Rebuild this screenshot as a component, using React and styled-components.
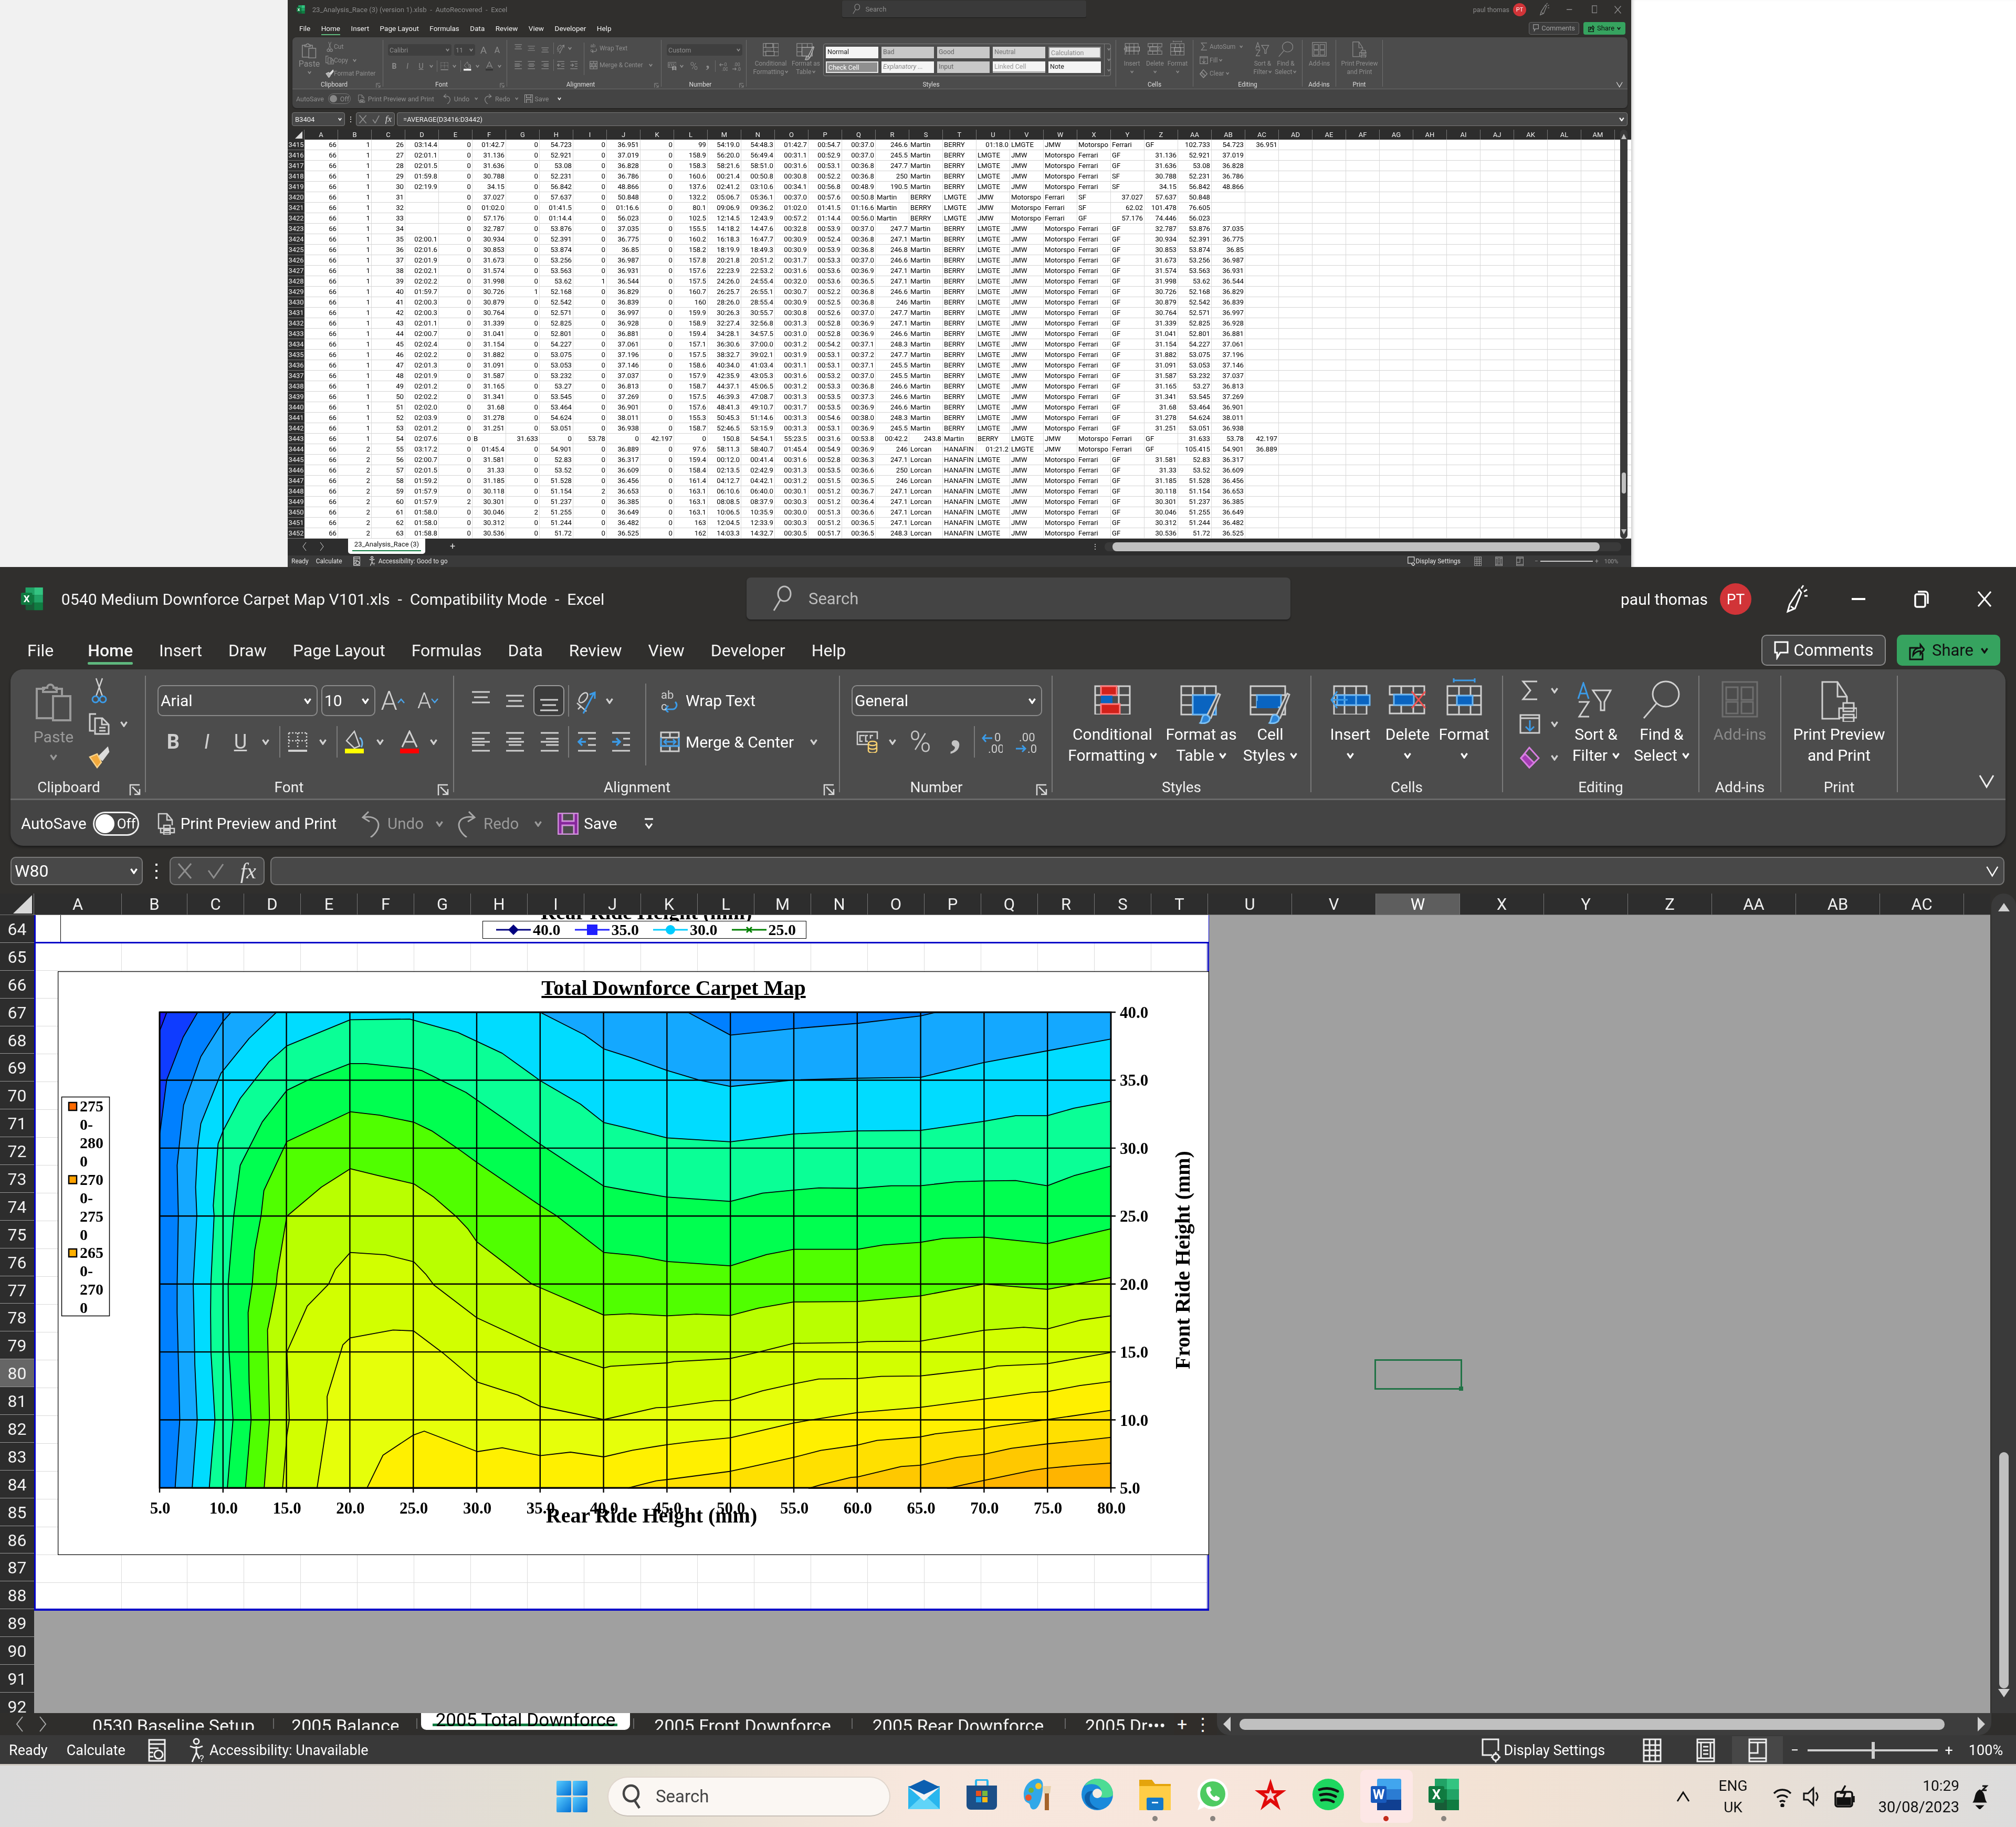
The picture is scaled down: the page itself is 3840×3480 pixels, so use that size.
import React from "react";
import styled, { createGlobalStyle } from "styled-components";

const UI = `Roboto, "Noto Sans", sans-serif`;
const SERIF = `"Liberation Serif", serif`;

const Global = createGlobalStyle`
  html, body { margin: 0; padding: 0; background: #fff; }
  * { box-sizing: border-box; }
  body { font-family: ${UI}; }
`;

/* ---------- icons ---------- */
const Svg = ({ w, h, s = 1, sw = 3, children }) => (
  <svg
    width={w * s}
    height={h * s}
    viewBox={`0 0 ${w} ${h}`}
    fill="none"
    stroke="currentColor"
    strokeWidth={sw}
    style={{ display: "block", flex: "none" }}
  >
    {children}
  </svg>
);

const Chev = ({ s = 1, big }) => (
  <Svg w={big ? 32 : 14} h={big ? 32 : 12} s={s} sw={big ? 3 : 3.4}>
    {big ? <path d="M3 6 16 28 29 6" /> : <path d="M1.5 2 7 10l5.5-8" />}
  </Svg>
);

const PasteIcon = ({ s }) => (
  <Svg w={68} h={78} s={s} sw={4}>
    <path d="M18 16H2v56h32" />
    <path d="M36 16h14v12" />
    <path d="M14 22v-8h8a6 6 0 0 1 12 0h6v8z" />
    <rect x={33} y={30} width={33} height={46} />
  </Svg>
);
const CutIcon = ({ s }) => (
  <Svg w={36} h={50} s={s} sw={2.5}>
    <path d="M12 2l12 34M24 2 12 36" />
    <circle cx={11} cy={42} r={6} stroke="#3b9be8" strokeWidth={3} />
    <circle cx={25} cy={42} r={6} stroke="#3b9be8" strokeWidth={3} />
  </Svg>
);
const CopyIcon = ({ s }) => (
  <Svg w={40} h={42} s={s}>
    <path d="M14 2H2v32h8" />
    <path d="M12 10h14l12 12v18H12z" />
    <path d="M25 10v12h13M20 28h12M20 34h12" />
  </Svg>
);
const BrushIcon = ({ s }) => (
  <Svg w={40} h={42} s={s} sw={2.5}>
    <path d="M36 2l2 8-12 16-8-6z" fill="#dcdcdc" stroke="#dcdcdc" />
    <path d="M2 20 16 14 24 30 16 40z" fill="#f2a93c" stroke="#f6d28c" />
  </Svg>
);
const AlignV = ({ pos, s }) => {
  const y = pos === "top" ? [3, 13, 23] : pos === "mid" ? [10, 20, 30] : [18, 28, 38];
  return (
    <Svg w={36} h={40} s={s} sw={3}>
      <path d={`M1 ${y[0]}h34M5 ${y[1]}h26M1 ${y[2]}h34`} />
    </Svg>
  );
};
const AlignH = ({ pos, s }) => {
  const m = pos === "left" ? "M1 14h24" : pos === "center" ? "M6 14h24" : "M11 14h24";
  const b = pos === "left" ? "M1 26h24" : pos === "center" ? "M6 26h24" : "M11 26h24";
  return (
    <Svg w={36} h={40} s={s} sw={3}>
      <path d={`M1 3h34${m}M1 20h34${b}M1 37h34`} />
    </Svg>
  );
};
const Orient = ({ s }) => (
  <Svg w={42} h={52} s={s} sw={2.5}>
    <ellipse cx={14} cy={20} rx={6} ry={11} transform="rotate(38 14 20)" />
    <path d="M2 30 20 46M4 42l6-6" />
    <path d="M14 50 34 12M26 14l10-4v12" stroke="#3b9be8" strokeWidth={3} />
  </Svg>
);
const Outdent = ({ s, flip }) => (
  <Svg w={36} h={40} s={s}>
    <path d={flip ? "M1 3h34M1 37h34M22 14h13M22 26h13" : "M1 3h34M1 37h34M20 14h15M20 26h15"} />
    <path
      d={flip ? "M1 20h14M9 13l7 7-7 7" : "M16 20H2M9 13l-7 7 7 7"}
      stroke="#3b9be8"
      strokeWidth={3.5}
    />
  </Svg>
);
const WrapIcon = ({ s }) => (
  <Svg w={36} h={44} s={s} sw={2.5}>
    <path d="M28 24a8 8 0 0 1-6 14H10M15 31l-6 7 6 6" stroke="#3b9be8" strokeWidth={3} />
    <text x={1} y={18} fontSize={22} fontFamily={UI} fill="currentColor" stroke="none">ab</text>
    <text x={1} y={40} fontSize={22} fontFamily={UI} fill="currentColor" stroke="none">c</text>
  </Svg>
);
const MergeIcon = ({ s }) => (
  <Svg w={38} h={40} s={s} sw={3}>
    <path d="M2 2h34v36H2zM2 12h34M2 28h34M19 2v10M19 28v10" />
    <path d="M2 12v16h34V12M9 20h20M13 15l-5 5 5 5M25 15l5 5-5 5" stroke="#3b9be8" />
  </Svg>
);
const BorderIcon = ({ s }) => (
  <Svg w={38} h={40} s={s} sw={2.5}>
    <path d="M2 3h34M2 3v30M36 3v30M19 3v30M2 18h34" strokeDasharray="3 3" />
    <path d="M1 37h36" strokeWidth={4} />
  </Svg>
);
const FillIcon = ({ s }) => (
  <Svg w={42} h={44} s={s} sw={2.5}>
    <path d="M3 20 18 2l10 28-10 4z" />
    <path d="M28 14c6 4 6 14 3 18" stroke="#68b5f0" strokeWidth={3} />
    <rect x={0} y={35} width={36} height={9} fill="#ffff00" stroke="none" />
  </Svg>
);
const ColorA = ({ s }) => (
  <Svg w={36} h={44} s={s} sw={3}>
    <path d="M4 32 18 2l14 30M9 22h18" />
    <rect x={0} y={35} width={36} height={9} fill="#ff0000" stroke="none" />
  </Svg>
);
const Acct = ({ s }) => (
  <Svg w={42} h={42} s={s} sw={2.5}>
    <path d="M24 26H2V2h38v14" />
    <path d="M12 9H7v11h5M16 9h-4M22 9h-4v11h4M32 9h-5v6" />
    <ellipse cx={31} cy={24} rx={8} ry={4} stroke="#f7d070" />
    <path d="M23 24v14a8 4 0 0 0 16 0V24M23 31a8 4 0 0 0 16 0" stroke="#f7d070" />
  </Svg>
);
const DecInc = ({ s, out }) => (
  <Svg w={40} h={46} s={s} sw={3}>
    {out ? (
      <>
        <path d="M2 36h18M8 29l-6 7 6 7" stroke="#3b9be8" transform="translate(0 -20)" />
        <text x={24} y={22} fontSize={22} fontFamily={UI} fill="currentColor" stroke="none">0</text>
        <text x={12} y={44} fontSize={22} fontFamily={UI} fill="currentColor" stroke="none">.00</text>
      </>
    ) : (
      <>
        <text x={6} y={22} fontSize={22} fontFamily={UI} fill="currentColor" stroke="none">.00</text>
        <path d="M0 36h18M12 30l6 6-6 6" stroke="#3b9be8" />
        <text x={22} y={44} fontSize={22} fontFamily={UI} fill="currentColor" stroke="none">.0</text>
      </>
    )}
  </Svg>
);
const TableBase = ({ children, s, w = 70, h = 56 }) => (
  <Svg w={w} h={h} s={s} sw={3}>
    <path d="M2 2h66v54H2zM2 19h66M2 38h66M24 2v54M47 2v54" />
    {children}
  </Svg>
);
const CondIcon = ({ s }) => (
  <TableBase s={s}>
    <rect x={13} y={2} width={30} height={17} fill="#d2211a" stroke="#ff7d7d" />
    <rect x={13} y={20} width={22} height={18} fill="#0a64c0" stroke="none" />
    <rect x={13} y={36} width={36} height={19} fill="#d2211a" stroke="#ff7d7d" />
  </TableBase>
);
const Paintbrush = () => (
  <g>
    <path d="M50 60 72 16l4 2-18 46" fill="#4c4c4c" stroke="#c8c8c8" />
    <path d="M44 58c6-4 14 2 12 8-2 6-12 8-18 6 4-4 2-10 6-14z" fill="#2e86d8" stroke="#7cc0f4" />
  </g>
);
const FmtTableIcon = ({ s }) => (
  <Svg w={80} h={74} s={s} sw={3}>
    <path d="M2 2h66v54H2zM2 19h66M2 38h66M24 2v54M47 2v54" />
    <rect x={24} y={19} width={44} height={37} fill="#0a64c0" stroke="#6cb6f2" />
    <Paintbrush />
  </Svg>
);
const CellStyleIcon = ({ s }) => (
  <Svg w={80} h={74} s={s} sw={3}>
    <path d="M2 2h66v54H2zM2 19h66M2 42h66" />
    <rect x={14} y={19} width={46} height={23} fill="#0a64c0" stroke="#6cb6f2" />
    <rect x={14} y={30} width={40} height={14} fill="#0a64c0" stroke="none" />
    <Paintbrush />
  </Svg>
);
const InsertIcon = ({ s }) => (
  <Svg w={78} h={56} s={s} sw={3}>
    <path d="M8 2h62v54H8zM8 19h62M8 38h62M28 2v54M50 2v54" />
    <rect x={14} y={19} width={62} height={19} fill="#0a64c0" stroke="#6cb6f2" />
    <path d="M28 19v19M50 19v19" stroke="#6cb6f2" />
    <path d="M34 28H4M14 12 3 28l11 16" stroke="#3b9be8" />
  </Svg>
);
const DeleteIcon = ({ s }) => (
  <Svg w={72} h={56} s={s} sw={3}>
    <path d="M2 2h66v16H2zM2 38h66v16H2zM24 2v16M47 2v16M24 38v16M47 38v16" />
    <rect x={10} y={18} width={38} height={20} fill="#0a64c0" stroke="#6cb6f2" />
    <path d="M44 12l26 32M70 12 44 44" stroke="#ef4f4f" />
  </Svg>
);
const FormatIcon = ({ s }) => (
  <Svg w={68} h={72} s={s} sw={3}>
    <path d="M2 16h64v54H2zM2 34h64M2 52h64M24 16v54M46 16v54" />
    <rect x={20} y={34} width={30} height={18} fill="#0a64c0" stroke="#6cb6f2" />
    <path d="M14 5h40M14 1v8M54 1v8" stroke="#3b9be8" />
  </Svg>
);
const SigmaIcon = ({ s }) => (
  <Svg w={32} h={38} s={s} sw={3}>
    <path d="M30 2H3l14 17L3 36h27" />
  </Svg>
);
const FillDownIcon = ({ s }) => (
  <Svg w={40} h={38} s={s} sw={3}>
    <path d="M2 2h36v34H2zM2 8h36" />
    <path d="M20 12v20M12 24l8 8 8-8" stroke="#3b9be8" />
  </Svg>
);
const EraserIcon = ({ s }) => (
  <Svg w={38} h={42} s={s} sw={3}>
    <path d="M18 2 36 22 18 40 2 22z" stroke="#d77ee0" />
    <path d="M2 22 10 14l17 17-9 9z" fill="#a43cb4" stroke="#d77ee0" />
  </Svg>
);
const SortIcon = ({ s }) => (
  <Svg w={72} h={68} s={s} sw={3}>
    <path d="M2 32 12 2l10 30M5 22h14" stroke="#3b9be8" />
    <path d="M3 38h19L4 66h19" />
    <path d="M30 16h34L52 38v16h-7V38z" />
  </Svg>
);
const FindIcon = ({ s }) => (
  <Svg w={72} h={74} s={s} sw={3}>
    <ellipse cx={44} cy={26} rx={25} ry={24} />
    <path d="M26 44 2 72" />
  </Svg>
);
const AddinsIcon = ({ s }) => (
  <Svg w={70} h={70} s={s} sw={3}>
    <path d="M2 2h66v66H2z" />
    <path d="M9 12h22v24H9zM38 12h22v24H38zM9 40h22v22H9zM38 40h22v22H38z" />
  </Svg>
);
const PrintPrevIcon = ({ s }) => (
  <Svg w={68} h={78} s={s} sw={3}>
    <path d="M36 72H2V2h29l18 28v12" />
    <path d="M31 2v28h18" />
    <path d="M42 42h20v16H42zM34 52h34v18H34zM42 64h20v14H42z" fill="#4c4c4c" />
  </Svg>
);
const UndoIcon = ({ s, flip }) => (
  <Svg w={40} h={52} s={s} sw={3}>
    <g transform={flip ? "translate(40 0) scale(-1 1)" : undefined}>
      <path d="M14 3 3 14l13 8" />
      <path d="M4 14c30-6 40 18 14 38" />
    </g>
  </Svg>
);
const SaveIcon = ({ s }) => (
  <Svg w={40} h={42} s={s} sw={3}>
    <rect x={1} y={1} width={38} height={40} fill="#87279c" stroke="#ce8fd8" />
    <rect x={9} y={1} width={22} height={15} fill="#4c4c4c" stroke="#ce8fd8" />
    <rect x={9} y={24} width={22} height={17} fill="#4c4c4c" stroke="#ce8fd8" />
  </Svg>
);
const PrintSmall = ({ s }) => (
  <Svg w={34} h={42} s={s} sw={2.5}>
    <path d="M14 30H2V2h16l10 12v10" />
    <path d="M18 2v12h10" />
    <path d="M12 24h12v8H12zM6 30h26v8H6zM12 34h12v8H12z" fill="#444" />
  </Svg>
);
const SearchGlass = ({ s }) => (
  <Svg w={36} h={50} s={s} sw={3}>
    <ellipse cx={22} cy={16} rx={12} ry={14} />
    <path d="M14 28 2 48" />
  </Svg>
);
const PenIcon = ({ s }) => (
  <Svg w={40} h={56} s={s} sw={3}>
    <path d="M24 10 6 38 2 52l14-6 12-30zM8 42l6 4" />
    <path d="M28 8l4-6M33 14l6-4M34 22h6" />
  </Svg>
);
const Minimize = ({ s }) => (
  <Svg w={26} h={6} s={s} sw={4}>
    <path d="M0 3h26" />
  </Svg>
);
const Restore = ({ s }) => (
  <Svg w={28} h={34} s={s} sw={3.5}>
    <rect x={2} y={8} width={19} height={24} rx={3} />
    <path d="M7 3h14a5 5 0 0 1 5 5v18" />
  </Svg>
);
const Maximize = ({ s }) => (
  <Svg w={24} h={34} s={s} sw={3}>
    <rect x={2} y={2} width={20} height={30} />
  </Svg>
);
const Close = ({ s }) => (
  <Svg w={26} h={30} s={s} sw={3}>
    <path d="M1 1l24 28M25 1 1 29" />
  </Svg>
);
const CommentIcon = ({ s }) => (
  <Svg w={28} h={36} s={s} sw={3}>
    <path d="M2 2h24v20H12L6 32V22H2z" />
  </Svg>
);
const ShareIcon = ({ s }) => (
  <Svg w={30} h={38} s={s} sw={3}>
    <path d="M18 14H2v22h24V24" stroke="#111" />
    <path d="M8 28c0-10 6-14 14-14V8l7 9-7 9v-6c-6 0-10 2-14 8z" stroke="#111" />
  </Svg>
);
const Launcher = ({ s }) => (
  <Svg w={22} h={24} s={s} sw={2.5}>
    <path d="M2 22V2h18" />
    <path d="M6 6l14 14M20 10v10H10" />
  </Svg>
);
const CalcSheetIcon = ({ s }) => (
  <Svg w={34} h={44} s={s} sw={3}>
    <path d="M2 2h30v40H2zM2 10h30M2 18h18M2 26h8M2 34h8" />
    <circle cx={20} cy={30} r={8} />
  </Svg>
);
const AccessIcon = ({ s }) => (
  <Svg w={34} h={48} s={s} sw={3}>
    <circle cx={14} cy={7} r={5} />
    <path d="M2 16c8 4 16 4 24 0M14 16v12L6 46M14 28l6 12" />
    <text x={20} y={46} fontSize={18} fontFamily={UI} fill="currentColor" stroke="none">?</text>
  </Svg>
);
const DisplayIcon = ({ s }) => (
  <Svg w={38} h={46} s={s} sw={3}>
    <path d="M20 32H2V2h30v22" />
    <circle cx={27} cy={36} r={6} />
    <path d="M27 26v4M27 42v4M18 36h3M33 36h3" />
  </Svg>
);
const ViewNormal = ({ s }) => (
  <Svg w={36} h={46} s={s} sw={3}>
    <path d="M2 2h32v42H2zM2 13h32M2 23h32M2 33h32M13 2v42M24 2v42" />
  </Svg>
);
const ViewPage = ({ s }) => (
  <Svg w={36} h={46} s={s} sw={3}>
    <path d="M2 2h32v42H2zM2 8h32M2 38h32M9 8v30h18V8M13 16h10M13 23h10M13 30h10" />
  </Svg>
);
const ViewBreak = ({ s }) => (
  <Svg w={36} h={46} s={s} sw={3}>
    <path d="M2 2h32v42H2zM2 8h32M2 38h32M18 8v20H2" />
  </Svg>
);
const ExcelLogo = ({ s = 1 }) => (
  <svg width={58 * s} height={60 * s} viewBox="0 0 58 60" style={{ display: "block" }}>
    <rect x={12} y={0} width={46} height={60} rx={3} fill="#185c37" />
    <rect x={35} y={0} width={23} height={20} fill="#33c481" />
    <rect x={12} y={0} width={23} height={20} fill="#21a366" />
    <rect x={12} y={20} width={23} height={20} fill="#107c41" />
    <rect x={35} y={20} width={23} height={20} fill="#21a366" />
    <rect x={35} y={40} width={23} height={20} fill="#107c41" />
    <rect x={0} y={14} width={30} height={32} rx={3} fill="#0f7a40" />
    <text x={15} y={39} fontSize={26} textAnchor="middle" fontWeight="700" fontFamily={UI} fill="#fff">X</text>
  </svg>
);
const WordLogo = () => (
  <svg width={58} height={60} viewBox="0 0 58 60" style={{ display: "block" }}>
    <rect x={12} y={0} width={46} height={60} rx={3} fill="#41a5ee" />
    <rect x={12} y={20} width={46} height={20} fill="#2b7cd3" />
    <rect x={12} y={40} width={46} height={20} fill="#103f91" />
    <rect x={0} y={14} width={30} height={32} rx={3} fill="#185abd" />
    <text x={15} y={39} fontSize={26} textAnchor="middle" fontWeight="700" fontFamily={UI} fill="#fff">W</text>
  </svg>
);
const WindowsLogo = () => (
  <svg width={59} height={60} viewBox="0 0 59 60" style={{ display: "block" }}>
    <defs>
      <linearGradient id="win" x1="0" y1="0" x2="1" y2="1">
        <stop offset="0" stopColor="#58ccff" />
        <stop offset="1" stopColor="#0470d4" />
      </linearGradient>
    </defs>
    <rect x={0} y={0} width={28} height={28} rx={2} fill="url(#win)" />
    <rect x={31} y={0} width={28} height={28} rx={2} fill="url(#win)" />
    <rect x={0} y={31} width={28} height={29} rx={2} fill="url(#win)" />
    <rect x={31} y={31} width={28} height={29} rx={2} fill="url(#win)" />
  </svg>
);
const MailIcon = () => (
  <svg width={60} height={56} viewBox="0 0 60 56" style={{ display: "block" }}>
    <rect x={0} y={12} width={60} height={44} fill="#29b6ee" />
    <path d="M0 56 30 28l30 28z" fill="#60d4f8" />
    <path d="M0 14 30 40 60 14z" fill="#f4f4f4" />
    <path d="M0 14 30 0l30 14-30 14z" fill="#0c5fb0" />
  </svg>
);
const StoreIcon = () => (
  <svg width={58} height={58} viewBox="0 0 58 58" style={{ display: "block" }}>
    <path d="M18 14V4a3 3 0 0 1 3-3h16a3 3 0 0 1 3 3v10" stroke="#29b6ee" strokeWidth={4} fill="none" />
    <path d="M0 12h58v38a8 8 0 0 1-8 8H8a8 8 0 0 1-8-8z" fill="#1c4f88" />
    <rect x={18} y={22} width={10} height={10} fill="#e8501c" />
    <rect x={30} y={22} width={10} height={10} fill="#78b83c" />
    <rect x={18} y={34} width={10} height={10} fill="#1ea0e8" />
    <rect x={30} y={34} width={10} height={10} fill="#fdb813" />
  </svg>
);
const PaintIcon = () => (
  <svg width={60} height={60} viewBox="0 0 60 60" style={{ display: "block" }}>
    <path d="M26 0C8 2 0 18 0 30c0 12 4 14 8 16 6 2 2 8 8 12 6 2 10-2 14-10 4-8 8-30 6-40-1-4-4-8-10-8z" fill="#31a8e8" />
    <circle cx={28} cy={14} r={6} fill="#f7c526" />
    <circle cx={14} cy={22} r={5} fill="#6fb23c" />
    <circle cx={9} cy={36} r={6} fill="#e9552c" />
    <rect x={40} y={26} width={8} height={34} fill="#a6642a" />
    <path d="M36 14h16l-2 14H38z" fill="#e9d2aa" />
  </svg>
);
const EdgeIcon = () => (
  <svg width={60} height={60} viewBox="0 0 60 60" style={{ display: "block" }}>
    <circle cx={30} cy={30} r={30} fill="#1a8adb" />
    <path d="M60 30C60 12 46 0 30 0 20 0 10 6 6 14c8-6 30-6 32 10 0 6-6 10-6 10 10 4 28 2 28-4z" fill="#4cdc94" />
    <path d="M6 36C6 52 22 60 36 58c-16-4-22-14-20-24 1-6 6-10 6-10C14 22 6 28 6 36z" fill="#0e5fa8" />
    <circle cx={30} cy={28} r={9} fill="#f6ece2" />
  </svg>
);
const FilesIcon = () => (
  <svg width={60} height={60} viewBox="0 0 60 60" style={{ display: "block" }}>
    <path d="M0 2h24l6 8h30v50H0z" fill="#e4a40c" />
    <rect x={0} y={14} width={60} height={46} fill="#ffcd46" />
    <rect x={14} y={36} width={32} height={24} rx={3} fill="#1478c8" />
    <rect x={24} y={44} width={12} height={3} fill="#e8f4ff" />
  </svg>
);
const WhatsIcon = () => (
  <svg width={58} height={60} viewBox="0 0 58 60" style={{ display: "block" }}>
    <path d="M29 0a29 29 0 0 1 0 58c-6 0-11-1-16-4L0 60l5-14A29 29 0 0 1 29 0z" fill="#fff" />
    <circle cx={29} cy={29} r={24} fill="#4ecb62" />
    <path d="M19 16c-4 3-3 10 2 17s12 11 17 9c3-1 5-4 4-6l-7-4-3 3c-4-2-7-6-8-10l3-3-3-7z" fill="#fff" />
  </svg>
);
const StarIcon = () => (
  <svg width={60} height={60} viewBox="0 0 60 60" style={{ display: "block" }}>
    <path d="M30 0l7 22h23L41 36l8 24-19-15-19 15 8-24L0 22h23z" fill="#e10a0a" />
    <path d="M30 20l3 8h9l-7 6 3 9-8-6-8 6 3-9-7-6h9z" fill="#f7d4d4" />
  </svg>
);
const SpotifyIcon = () => (
  <svg width={60} height={60} viewBox="0 0 60 60" style={{ display: "block" }}>
    <circle cx={30} cy={30} r={30} fill="#1ed760" />
    <path d="M13 21c12-4 24-3 35 3M15 31c10-3 20-2 29 3M17 41c8-2 16-1 23 3" stroke="#111" strokeWidth={5} fill="none" strokeLinecap="round" />
  </svg>
);

/* ---------- shared bits ---------- */
const Slot = styled.div`
  width: ${(p) => p.$w}px;
  margin-left: ${(p) => p.$ml || 0}px;
  flex: none;
  display: flex;
  align-items: center;
  justify-content: center;
  color: ${(p) => p.$c || "inherit"};
  font-size: ${(p) => p.$fs || 30}px;
  font-family: ${(p) => (p.$serif ? SERIF : "inherit")};
  font-style: ${(p) => (p.$italic ? "italic" : "normal")};
  font-weight: ${(p) => (p.$bold ? 700 : p.$light ? 300 : 400)};
  height: 100%;
`;

/* ---------- mini window (100% scale) ---------- */
const Top = styled.div`
  display: flex;
  height: 1080px;
`;
const SideLeft = styled.div`
  width: 548px;
  background: #f1f1f1;
`;
const SideRight = styled.div`
  flex: 1;
  background: #fff;
  box-shadow: inset 6px 0 6px -4px rgba(0, 0, 0, 0.25);
`;
const Mini = styled.div`
  width: 2559px;
  background: #302f2d;
  display: flex;
  flex-direction: column;
  overflow: hidden;
  color: #fff;
`;
const MTitle = styled.div`
  height: 36px;
  display: grid;
  grid-template-columns: 1056px 465px 1fr;
  align-items: center;
`;
const MTitleLeft = styled.div`
  display: flex;
  align-items: center;
  gap: 14px;
  padding-left: 17px;
  font-size: 13.2px;
  color: #8b8b8b;
  white-space: pre;
`;
const MSearch = styled.div`
  height: 32px;
  align-self: start;
  margin-top: 1px;
  background: #3a3a3a;
  border-radius: 3px;
  box-shadow: 0 1px 1px #1c1c1c;
  display: flex;
  align-items: center;
  gap: 10px;
  padding-left: 20px;
  color: #8b8b8b;
  font-size: 13px;
`;
const MUser = styled.div`
  display: flex;
  align-items: center;
  justify-content: flex-end;
  color: #8b8b8b;
  font-size: 12.5px;
  padding-right: 6px;
`;
const Avatar = styled.div`
  width: ${(p) => p.$d}px;
  height: ${(p) => p.$d}px;
  border-radius: 50%;
  background: #d13438;
  color: #fff;
  font-size: ${(p) => p.$fs}px;
  display: flex;
  align-items: center;
  justify-content: center;
  margin-left: ${(p) => p.$ml}px;
`;
const MTabs = styled.div`
  height: 35px;
  display: flex;
  align-items: center;
  padding-left: 22px;
  gap: 20.5px;
  font-size: 13.5px;
  position: relative;
`;
const MTab = styled.span`
  position: relative;
  color: #f4f4f4;
  ${(p) =>
    p.$on &&
    `&::after { content: ""; position: absolute; left: 0; right: 0; bottom: -5px; height: 2px; background: #5fb87e; }`}
`;
const MTabRight = styled.div`
  margin-left: auto;
  margin-right: 11px;
  display: flex;
  gap: 8px;
`;
const MComments = styled.div`
  width: 96px;
  height: 24px;
  border: 1px solid #666;
  border-radius: 4px;
  background: #3c3c3c;
  color: #a0a0a0;
  font-size: 13px;
  display: flex;
  align-items: center;
  justify-content: center;
  gap: 5px;
`;
const MShare = styled.div`
  width: 80px;
  height: 24px;
  border-radius: 4px;
  background: #36a35f;
  color: #111;
  font-size: 13px;
  display: flex;
  align-items: center;
  justify-content: center;
  gap: 5px;
`;
const MRibbon = styled.div`
  margin-left: 9px;
  width: 2543px;
  height: 135px;
  border-radius: 8px;
  background: #444;
  overflow: hidden;
  display: flex;
  flex-direction: column;
  box-shadow: 0 1px 2px #1b1b1b;
`;
const MGroups = styled.div`
  height: 99px;
  padding-top: 5px;
  display: flex;
  background: #4c4c4c;
  border-bottom: 1px solid #6b6b6b;
  color: #8e8e8e;
  svg { filter: grayscale(1); }
`;
const MGroup = styled.div`
  width: ${(p) => p.$w}px;
  height: 89px;
  flex: none;
  border-right: 1px solid #6e6e6e;
  display: flex;
  flex-direction: column;
  position: relative;
`;
const MBody = styled.div`
  flex: 1;
  min-height: 0;
  display: flex;
  padding-top: ${(p) => p.$pt || 0}px;
  padding-left: ${(p) => p.$pl || 0}px;
`;
const MColumn = styled.div`
  display: flex;
  flex-direction: column;
  width: ${(p) => (p.$w ? p.$w + "px" : "auto")};
  padding-top: ${(p) => p.$pt || 0}px;
  padding-left: ${(p) => p.$pl || 0}px;
  flex: none;
  align-items: ${(p) => p.$align || "stretch"};
`;
const MRow = styled.div`
  display: flex;
  align-items: center;
  height: ${(p) => p.$h || 22}px;
  margin-top: ${(p) => p.$mt || 0}px;
  font-size: 12px;
  color: #8e8e8e;
`;
const MLabel = styled.div`
  height: 16px;
  line-height: 16px;
  margin-bottom: -4px;
  padding-right: ${(p) => p.$pr || 0}px;
  text-align: center;
  font-size: 12px;
  color: #dcdcdc;
`;
const MLaunch = styled.div`
  position: absolute;
  right: 4px;
  bottom: -3px;
  color: #8e8e8e;
`;
const MCombo = styled.div`
  width: ${(p) => p.$w}px;
  height: 22px;
  margin-right: ${(p) => p.$mr || 0}px;
  background: #3f3f3f;
  border-radius: 4px;
  font-size: 12.5px;
  color: #8e8e8e;
  display: flex;
  align-items: center;
  justify-content: space-between;
  padding: 0 4px 0 3px;
`;
const MSep = styled.div`
  width: 1px;
  height: ${(p) => p.$h || 22}px;
  margin-left: ${(p) => p.$ml || 0}px;
  background: #6e6e6e;
  flex: none;
`;
const MBig = styled.div`
  width: ${(p) => p.$w}px;
  flex: none;
  display: flex;
  flex-direction: column;
  align-items: center;
  font-size: 12px;
  color: #8e8e8e;
`;
const MBigIcon = styled.div`
  height: 37px;
  padding-top: ${(p) => p.$t ?? 2}px;
  flex: none;
`;
const MBigLine = styled.div`
  height: 16px;
  line-height: 16px;
  white-space: nowrap;
  display: flex;
  align-items: center;
  gap: 2px;
`;
const Gallery = styled.div`
  margin-left: 12px;
  margin-top: 7px;
  width: 548px;
  height: 62px;
  border: 1px solid #7e7e7e;
  border-radius: 4px;
  display: grid;
  grid-template-columns: repeat(5, 100px) 17px;
  grid-template-rows: repeat(2, 22px);
  gap: 6px;
  padding: 5px 0 0 4px;
  position: relative;
`;
const Swatch = styled.div`
  background: ${(p) => p.$bg};
  color: ${(p) => p.$c};
  font-style: ${(p) => (p.$i ? "italic" : "normal")};
  font-size: 12.5px;
  line-height: 20px;
  padding-left: 3px;
  border: ${(p) => (p.$b ? `2px solid ${p.$b}` : "none")};
  border-bottom: ${(p) => (p.$u ? `3px double #888` : undefined)};
  overflow: hidden;
  white-space: nowrap;
`;
const GalleryBtn = styled.div`
  grid-column: 6;
  grid-row: 1 / span 2;
  margin-top: -5px;
  height: 60px;
  border-left: 1px solid #7e7e7e;
  display: flex;
  flex-direction: column;
  align-items: center;
  justify-content: space-around;
`;
const MTail = styled.div`
  flex: 1;
  display: flex;
  justify-content: flex-end;
  align-items: flex-end;
  padding: 0 9px 2px 0;
  color: #ddd;
`;
const MQat = styled.div`
  flex: 1;
  display: flex;
  align-items: center;
  padding-left: 7px;
  font-size: 12.5px;
  color: #8e8e8e;
  svg { filter: grayscale(1); }
`;
const MToggle = styled.div`
  width: 43px;
  height: 20px;
  margin-left: 8px;
  border: 1px solid #777;
  border-radius: 10px;
  display: flex;
  align-items: center;
  gap: 6px;
  padding-left: 2px;
  &::before { content: ""; width: 14px; height: 14px; border-radius: 50%; background: #888; }
`;
const MText = styled.span`
  margin-left: ${(p) => p.$ml || 0}px;
  white-space: nowrap;
`;
const MFormula = styled.div`
  height: 26px;
  margin-top: 8px;
  padding-left: 8px;
  display: flex;
  align-items: stretch;
  font-size: 13px;
`;
const MFBox = styled.div`
  width: ${(p) => p.$w}px;
  flex: ${(p) => (p.$grow ? 1 : "none")};
  margin-left: ${(p) => p.$ml || 0}px;
  margin-right: ${(p) => p.$mr || 0}px;
  background: #484848;
  border: 1px solid #7a7a7a;
  border-radius: 4px;
  display: flex;
  align-items: center;
  justify-content: space-between;
  padding: 0 5px;
  color: #f2f2f2;
`;
const MSheetWrap = styled.div`
  margin-top: 7px;
  display: flex;
  flex-direction: column;
  height: 779px;
  position: relative;
`;
const MColRow = styled.div`
  display: flex;
  height: 19px;
  flex: none;
  background: #2d2d2d;
`;
const MCorner = styled.div`
  width: 32px;
  border-right: 1px solid #777;
  display: flex;
  justify-content: flex-end;
  align-items: flex-end;
  padding: 0 3px 2px 0;
`;
const MColHead = styled.div`
  width: 64px;
  flex: none;
  text-align: center;
  font-size: 13px;
  line-height: 19px;
  color: #f0f0f0;
  border-right: 1px solid #777;
`;
const MRowLine = styled.div`
  display: flex;
  height: 20px;
  background: #fff;
  flex: none;
`;
const MRowHead = styled.div`
  width: 32px;
  flex: none;
  background: #2d2d2d;
  color: #eee;
  font-size: 13px;
  line-height: 20px;
  text-align: center;
  border-bottom: 1px solid #777;
`;
const MCell = styled.div`
  width: 64px;
  flex: none;
  height: 20px;
  padding: 0 2px;
  font-size: 13.2px;
  line-height: 20px;
  color: #000;
  text-align: ${(p) => (p.$left ? "left" : "right")};
  border-right: 1px solid #dadada;
  border-bottom: 1px solid #d4d4d4;
  white-space: nowrap;
  overflow: hidden;
`;
const MRowFill = styled.div`
  flex: 1;
  border-bottom: 1px solid #d4d4d4;
`;
const MVScroll = styled.div`
  position: absolute;
  right: 7px;
  top: 0;
  bottom: 0;
  width: 14px;
  background: #3a3a3a;
  border-radius: 7px;
  display: flex;
  flex-direction: column;
  align-items: center;
  padding: 8px 0;
  color: #c0c0c0;
`;
const MThumbV = styled.div`
  width: 8px;
  height: 40px;
  background: #c0c0c0;
  border-radius: 4px;
  margin-top: 635px;
`;
const MBottom = styled.div`
  height: 32px;
  display: flex;
  align-items: flex-start;
  background: #2d2d2d;
  position: relative;
  font-size: 13.5px;
  color: #ddd;
`;
const MSheetTab = styled.div`
  width: 147px;
  height: 29px;
  margin-left: 34px;
  background: #fff;
  color: #111;
  border-radius: 0 0 5px 5px;
  text-align: center;
  line-height: 22px;
  font-size: 13px;
  position: relative;
  &::after { content: ""; position: absolute; left: 8px; right: 8px; bottom: 5px; height: 2px; background: #107c41; }
`;
const MHScroll = styled.div`
  position: absolute;
  left: 1556px;
  width: 984px;
  top: 7px;
  height: 17px;
  border-radius: 8px;
  background: #3a3a3a;
  padding: 0 41px 0 15px;
`;
const MThumbH = styled.div`
  height: 100%;
  border-radius: 8px;
  background: #c0c0c0;
`;
const MStatus = styled.div`
  height: 22px;
  background: #3a3a3a;
  display: flex;
  align-items: center;
  padding-left: 7px;
  font-size: 12px;
  color: #e6e6e6;
`;

const colName = (i) => (i < 26 ? String.fromCharCode(65 + i) : "A" + String.fromCharCode(65 + i - 26));
const FIRM = ["LMGTE", "JMW", "Motorspo", "Ferrari"];

const normal = (st, lap, t, e, a, g, b, i, c, kph, el, hr, o, p, q, top, cls) => [
  "66", st, lap, t, e, a, g, b, i, c, "0", kph, el, hr, o, p, q, top,
  ...(st === "1" ? ["Martin", "BERRY"] : ["Lorcan", "HANAFIN"]),
  ...FIRM, cls, a, b, c,
];

const L1 = "1";
const L2 = "2";
const miniRows = [
  ["66", L1, "26", "03:14.4", "0", "01:42.7", "0", "54.723", "0", "36.951", "0", "99", "54:19.0", "54:48.3", "01:42.7", "00:54.7", "00:37.0", "246.6", "Martin", "BERRY", "01:18.0", ...FIRM, "GF", "102.733", "54.723", "36.951"],
  normal(L1, "27", "02:01.1", "0", "31.136", "0", "52.921", "0", "37.019", "158.9", "56:20.0", "56:49.4", "00:31.1", "00:52.9", "00:37.0", "245.5", "GF"),
  normal(L1, "28", "02:01.5", "0", "31.636", "0", "53.08", "0", "36.828", "158.3", "58:21.6", "58:51.0", "00:31.6", "00:53.1", "00:36.8", "247.7", "GF"),
  normal(L1, "29", "01:59.8", "0", "30.788", "0", "52.231", "0", "36.786", "160.6", "00:21.4", "00:50.8", "00:30.8", "00:52.2", "00:36.8", "250", "SF"),
  normal(L1, "30", "02:19.9", "0", "34.15", "0", "56.842", "0", "48.866", "137.6", "02:41.2", "03:10.6", "00:34.1", "00:56.8", "00:48.9", "190.5", "SF"),
  ["66", L1, "31", "", "0", "37.027", "0", "57.637", "0", "50.848", "0", "132.2", "05:06.7", "05:36.1", "00:37.0", "00:57.6", "00:50.8", "Martin", "BERRY", ...FIRM, "SF", "37.027", "57.637", "50.848"],
  ["66", L1, "32", "", "0", "01:02.0", "0", "01:41.5", "0", "01:16.6", "0", "80.1", "09:06.9", "09:36.2", "01:02.0", "01:41.5", "01:16.6", "Martin", "BERRY", ...FIRM, "SF", "62.02", "101.478", "76.605"],
  ["66", L1, "33", "", "0", "57.176", "0", "01:14.4", "0", "56.023", "0", "102.5", "12:14.5", "12:43.9", "00:57.2", "01:14.4", "00:56.0", "Martin", "BERRY", ...FIRM, "GF", "57.176", "74.446", "56.023"],
  normal(L1, "34", "", "0", "32.787", "0", "53.876", "0", "37.035", "155.5", "14:18.2", "14:47.6", "00:32.8", "00:53.9", "00:37.0", "247.7", "GF"),
  normal(L1, "35", "02:00.1", "0", "30.934", "0", "52.391", "0", "36.775", "160.2", "16:18.3", "16:47.7", "00:30.9", "00:52.4", "00:36.8", "247.1", "GF"),
  normal(L1, "36", "02:01.6", "0", "30.853", "0", "53.874", "0", "36.85", "158.2", "18:19.9", "18:49.3", "00:30.9", "00:53.9", "00:36.8", "246.8", "GF"),
  normal(L1, "37", "02:01.9", "0", "31.673", "0", "53.256", "0", "36.987", "157.8", "20:21.8", "20:51.2", "00:31.7", "00:53.3", "00:37.0", "246.6", "GF"),
  normal(L1, "38", "02:02.1", "0", "31.574", "0", "53.563", "0", "36.931", "157.6", "22:23.9", "22:53.2", "00:31.6", "00:53.6", "00:36.9", "247.1", "GF"),
  normal(L1, "39", "02:02.2", "0", "31.998", "0", "53.62", "1", "36.544", "157.5", "24:26.0", "24:55.4", "00:32.0", "00:53.6", "00:36.5", "247.1", "GF"),
  normal(L1, "40", "01:59.7", "0", "30.726", "1", "52.168", "0", "36.829", "160.7", "26:25.7", "26:55.1", "00:30.7", "00:52.2", "00:36.8", "246.6", "GF"),
  normal(L1, "41", "02:00.3", "0", "30.879", "0", "52.542", "0", "36.839", "160", "28:26.0", "28:55.4", "00:30.9", "00:52.5", "00:36.8", "246", "GF"),
  normal(L1, "42", "02:00.3", "0", "30.764", "0", "52.571", "0", "36.997", "159.9", "30:26.3", "30:55.7", "00:30.8", "00:52.6", "00:37.0", "247.7", "GF"),
  normal(L1, "43", "02:01.1", "0", "31.339", "0", "52.825", "0", "36.928", "158.9", "32:27.4", "32:56.8", "00:31.3", "00:52.8", "00:36.9", "247.1", "GF"),
  normal(L1, "44", "02:00.7", "0", "31.041", "0", "52.801", "0", "36.881", "159.4", "34:28.1", "34:57.5", "00:31.0", "00:52.8", "00:36.9", "246.6", "GF"),
  normal(L1, "45", "02:02.4", "0", "31.154", "0", "54.227", "0", "37.061", "157.1", "36:30.6", "37:00.0", "00:31.2", "00:54.2", "00:37.1", "248.3", "GF"),
  normal(L1, "46", "02:02.2", "0", "31.882", "0", "53.075", "0", "37.196", "157.5", "38:32.7", "39:02.1", "00:31.9", "00:53.1", "00:37.2", "247.7", "GF"),
  normal(L1, "47", "02:01.3", "0", "31.091", "0", "53.053", "0", "37.146", "158.6", "40:34.0", "41:03.4", "00:31.1", "00:53.1", "00:37.1", "245.5", "GF"),
  normal(L1, "48", "02:01.9", "0", "31.587", "0", "53.232", "0", "37.037", "157.9", "42:35.9", "43:05.3", "00:31.6", "00:53.2", "00:37.0", "245.5", "GF"),
  normal(L1, "49", "02:01.2", "0", "31.165", "0", "53.27", "0", "36.813", "158.7", "44:37.1", "45:06.5", "00:31.2", "00:53.3", "00:36.8", "246.6", "GF"),
  normal(L1, "50", "02:02.2", "0", "31.341", "0", "53.545", "0", "37.269", "157.5", "46:39.3", "47:08.7", "00:31.3", "00:53.5", "00:37.3", "246.6", "GF"),
  normal(L1, "51", "02:02.0", "0", "31.68", "0", "53.464", "0", "36.901", "157.6", "48:41.3", "49:10.7", "00:31.7", "00:53.5", "00:36.9", "246.6", "GF"),
  normal(L1, "52", "02:03.9", "0", "31.278", "0", "54.624", "0", "38.011", "155.3", "50:45.3", "51:14.6", "00:31.3", "00:54.6", "00:38.0", "248.3", "GF"),
  normal(L1, "53", "02:01.2", "0", "31.251", "0", "53.051", "0", "36.938", "158.7", "52:46.5", "53:15.9", "00:31.3", "00:53.1", "00:36.9", "245.5", "GF"),
  ["66", L1, "54", "02:07.6", "0", "B", "31.633", "0", "53.78", "0", "42.197", "0", "150.8", "54:54.1", "55:23.5", "00:31.6", "00:53.8", "00:42.2", "243.8", "Martin", "BERRY", ...FIRM, "GF", "31.633", "53.78", "42.197"],
  ["66", L2, "55", "03:17.2", "0", "01:45.4", "0", "54.901", "0", "36.889", "0", "97.6", "58:11.3", "58:40.7", "01:45.4", "00:54.9", "00:36.9", "246", "Lorcan", "HANAFIN", "01:21.2", ...FIRM, "GF", "105.415", "54.901", "36.889"],
  normal(L2, "56", "02:00.7", "0", "31.581", "0", "52.83", "0", "36.317", "159.4", "00:12.0", "00:41.4", "00:31.6", "00:52.8", "00:36.3", "247.1", "GF"),
  normal(L2, "57", "02:01.5", "0", "31.33", "0", "53.52", "0", "36.609", "158.4", "02:13.5", "02:42.9", "00:31.3", "00:53.5", "00:36.6", "250", "GF"),
  normal(L2, "58", "01:59.2", "0", "31.185", "0", "51.528", "0", "36.456", "161.4", "04:12.7", "04:42.1", "00:31.2", "00:51.5", "00:36.5", "246", "GF"),
  normal(L2, "59", "01:57.9", "0", "30.118", "0", "51.154", "2", "36.653", "163.1", "06:10.6", "06:40.0", "00:30.1", "00:51.2", "00:36.7", "247.1", "GF"),
  normal(L2, "60", "01:57.9", "2", "30.301", "0", "51.237", "0", "36.385", "163.1", "08:08.5", "08:37.9", "00:30.3", "00:51.2", "00:36.4", "247.1", "GF"),
  normal(L2, "61", "01:58.0", "0", "30.046", "2", "51.255", "0", "36.649", "163.1", "10:06.5", "10:35.9", "00:30.0", "00:51.3", "00:36.6", "247.1", "GF"),
  normal(L2, "62", "01:58.0", "0", "30.312", "0", "51.244", "0", "36.482", "163", "12:04.5", "12:33.9", "00:30.3", "00:51.2", "00:36.5", "247.1", "GF"),
  normal(L2, "63", "01:58.8", "0", "30.536", "0", "51.72", "0", "36.525", "162", "14:03.3", "14:32.7", "00:30.5", "00:51.7", "00:36.5", "248.3", "GF"),
];
const MINI_COLS = 39;
const S = 0.4;

const MiniBigBtn = ({ w, icon, lines, t }) => (
  <MBig $w={w}>
    <MBigIcon $t={t}>{icon}</MBigIcon>
    {lines.map((l, i) => (
      <MBigLine key={i}>{l}</MBigLine>
    ))}
  </MBig>
);

const MiniWindow = () => (
  <Mini>
    <MTitle>
      <MTitleLeft>
        <ExcelLogo s={0.27} />
        23_Analysis_Race (3) (version 1).xlsb  -  AutoRecovered  -  Excel
      </MTitleLeft>
      <MSearch>
        <SearchGlass s={0.4} />
        Search
      </MSearch>
      <MUser>
        paul thomas
        <Avatar $d={25} $fs={11} $ml={7}>PT</Avatar>
        <Slot $w={48} $ml={11}><PenIcon s={0.45} /></Slot>
        <Slot $w={47}><Minimize s={0.4} /></Slot>
        <Slot $w={48}><Maximize s={0.45} /></Slot>
        <Slot $w={40}><Close s={0.5} /></Slot>
      </MUser>
    </MTitle>
    <MTabs>
      {["File", "Home", "Insert", "Page Layout", "Formulas", "Data", "Review", "View", "Developer", "Help"].map((t) => (
        <MTab key={t} $on={t === "Home"}>{t}</MTab>
      ))}
      <MTabRight>
        <MComments><CommentIcon s={0.4} />Comments</MComments>
        <MShare><ShareIcon s={0.4} />Share<Chev s={0.5} /></MShare>
      </MTabRight>
    </MTabs>
    <MRibbon>
      <MGroups>
        <MGroup $w={173}>
          <MBody>
            <MColumn $w={64} $align="center" $pt={4}>
              <PasteIcon s={S} />
              <MBigLine style={{ marginTop: 3 }}>Paste</MBigLine>
              <div style={{ marginTop: 5 }}><Chev s={0.5} /></div>
            </MColumn>
            <MColumn>
              <MRow $h={26}><Slot $w={14}><CutIcon s={S} /></Slot><MText $ml={1}>Cut</MText></MRow>
              <MRow $h={26}><Slot $w={14}><CopyIcon s={S} /></Slot><MText $ml={1}>Copy</MText><Slot $w={24}><Chev s={0.5} /></Slot></MRow>
              <MRow $h={26}><Slot $w={14}><BrushIcon s={S} /></Slot><MText $ml={1}>Format Painter</MText></MRow>
            </MColumn>
          </MBody>
          <MLabel $pr={13}>Clipboard</MLabel>
          <MLaunch><Launcher s={0.4} /></MLaunch>
        </MGroup>
        <MGroup $w={236}>
          <MBody $pt={8} $pl={9}>
            <MColumn>
              <MRow>
                <MCombo $w={121} $mr={5}>Calibri<Chev s={0.5} /></MCombo>
                <MCombo $w={40}>11<Chev s={0.5} /></MCombo>
                <Slot $w={32} $fs={19}>A</Slot>
                <Slot $w={20} $fs={16}>A</Slot>
              </MRow>
              <MRow $mt={9}>
                <Slot $w={24} $fs={14} $bold>B</Slot>
                <Slot $w={26} $fs={14} $italic>I</Slot>
                <Slot $w={26} $fs={14}><u>U</u></Slot>
                <Slot $w={12}><Chev s={0.5} /></Slot>
                <MSep $ml={5} />
                <Slot $w={28}><BorderIcon s={S} /></Slot>
                <Slot $w={8}><Chev s={0.5} /></Slot>
                <MSep $ml={8} />
                <Slot $w={26}><FillIcon s={S} /></Slot>
                <Slot $w={10}><Chev s={0.5} /></Slot>
                <Slot $w={36}><ColorA s={S} /></Slot>
                <Slot $w={2}><Chev s={0.5} /></Slot>
              </MRow>
            </MColumn>
          </MBody>
          <MLabel $pr={13}>Font</MLabel>
          <MLaunch><Launcher s={0.4} /></MLaunch>
        </MGroup>
        <MGroup $w={294}>
          <MBody $pt={5} $pl={8}>
            <MColumn $w={138}>
              <MRow>
                <Slot $w={26}><AlignV pos="top" s={S} /></Slot>
                <Slot $w={25}><AlignV pos="mid" s={S} /></Slot>
                <Slot $w={26}><AlignV pos="bot" s={S} /></Slot>
                <MSep $ml={3} />
                <Slot $w={26}><Orient s={S} /></Slot>
                <Slot $w={8}><Chev s={0.5} /></Slot>
              </MRow>
              <MRow $mt={10}>
                <Slot $w={26}><AlignH pos="left" s={S} /></Slot>
                <Slot $w={25}><AlignH pos="center" s={S} /></Slot>
                <Slot $w={26}><AlignH pos="right" s={S} /></Slot>
                <MSep $ml={3} />
                <Slot $w={26}><Outdent s={S} /></Slot>
                <Slot $w={24}><Outdent s={S} flip /></Slot>
              </MRow>
            </MColumn>
            <MSep $h={62} />
            <MColumn $pl={7}>
              <MRow><Slot $w={22}><WrapIcon s={S} /></Slot><MText>Wrap Text</MText></MRow>
              <MRow $mt={10}><Slot $w={22}><MergeIcon s={S} /></Slot><MText>Merge &amp; Center</MText><Slot $w={30}><Chev s={0.5} /></Slot></MRow>
            </MColumn>
          </MBody>
          <MLabel $pr={13}>Alignment</MLabel>
          <MLaunch><Launcher s={0.4} /></MLaunch>
        </MGroup>
        <MGroup $w={162}>
          <MBody $pt={8} $pl={10}>
            <MColumn>
              <MRow><MCombo $w={144}>Custom<Chev s={0.5} /></MCombo></MRow>
              <MRow $mt={9}>
                <Slot $w={20}><Acct s={S} /></Slot>
                <Slot $w={16}><Chev s={0.5} /></Slot>
                <Slot $w={32} $fs={20} $light>%</Slot>
                <Slot $w={20} $fs={28} $serif $bold style={{ paddingBottom: 12 }}>,</Slot>
                <MSep $ml={4} />
                <Slot $w={30}><DecInc s={S} out /></Slot>
                <Slot $w={20}><DecInc s={S} /></Slot>
              </MRow>
            </MColumn>
          </MBody>
          <MLabel $pr={13}>Number</MLabel>
          <MLaunch><Launcher s={0.4} /></MLaunch>
        </MGroup>
        <MGroup $w={704}>
          <MBody>
            <MiniBigBtn w={92} t={6} icon={<CondIcon s={0.44} />} lines={["Conditional", <>Formatting<Chev s={0.45} /></>]} />
            <MiniBigBtn w={42} t={6} icon={<FmtTableIcon s={0.44} />} lines={["Format as", <>Table<Chev s={0.45} /></>]} />
            <Gallery>
              <Swatch $bg="#f4f4f4" $c="#222">Normal</Swatch>
              <Swatch $bg="#c8c8c8" $c="#666">Bad</Swatch>
              <Swatch $bg="#c8c8c8" $c="#666">Good</Swatch>
              <Swatch $bg="#d2d2d2" $c="#777">Neutral</Swatch>
              <Swatch $bg="#e8e8e8" $c="#888" $b="#8a8a8a">Calculation</Swatch>
              <GalleryBtn><Chev s={0.45} /><Chev s={0.45} /><Chev s={0.45} /></GalleryBtn>
              <Swatch $bg="#8f8f8f" $c="#fff" $b="#e8e8e8">Check Cell</Swatch>
              <Swatch $bg="#f4f4f4" $c="#888" $i>Explanatory ...</Swatch>
              <Swatch $bg="#c8c8c8" $c="#666">Input</Swatch>
              <Swatch $bg="#f4f4f4" $c="#999" $u>Linked Cell</Swatch>
              <Swatch $bg="#f4f4f4" $c="#222">Note</Swatch>
            </Gallery>
          </MBody>
          <MLabel>Styles</MLabel>
        </MGroup>
        <MGroup $w={147}>
          <MBody>
            <MiniBigBtn w={60} t={6} icon={<InsertIcon s={S} />} lines={["Insert", <Chev s={0.45} />]} />
            <MiniBigBtn w={28} t={6} icon={<DeleteIcon s={S} />} lines={["Delete", <Chev s={0.45} />]} />
            <MiniBigBtn w={58} t={1} icon={<FormatIcon s={S} />} lines={["Format", <Chev s={0.45} />]} />
          </MBody>
          <MLabel>Cells</MLabel>
        </MGroup>
        <MGroup $w={208}>
          <MBody>
            <MColumn $w={112} $pl={13}>
              <MRow $h={26}><Slot $w={14}><SigmaIcon s={S} /></Slot><MText $ml={4}>AutoSum</MText><Slot $w={22}><Chev s={0.45} /></Slot></MRow>
              <MRow $h={26}><Slot $w={14}><FillDownIcon s={S} /></Slot><MText $ml={4}>Fill</MText><Slot $w={12}><Chev s={0.45} /></Slot></MRow>
              <MRow $h={26}><Slot $w={14}><EraserIcon s={S} /></Slot><MText $ml={4}>Clear</MText><Slot $w={12}><Chev s={0.45} /></Slot></MRow>
            </MColumn>
            <MiniBigBtn w={40} t={4} icon={<SortIcon s={S} />} lines={["Sort &", <>Filter<Chev s={0.45} /></>]} />
            <MiniBigBtn w={48} t={3} icon={<FindIcon s={S} />} lines={["Find &", <>Select<Chev s={0.45} /></>]} />
          </MBody>
          <MLabel>Editing</MLabel>
        </MGroup>
        <MGroup $w={64}>
          <MBody><MiniBigBtn w={64} t={4} icon={<AddinsIcon s={S} />} lines={["Add-ins"]} /></MBody>
          <MLabel>Add-ins</MLabel>
        </MGroup>
        <MGroup $w={89}>
          <MBody><MiniBigBtn w={89} t={3} icon={<PrintPrevIcon s={S} />} lines={["Print Preview", "and Print"]} /></MBody>
          <MLabel>Print</MLabel>
        </MGroup>
        <MTail><Chev big s={0.42} /></MTail>
      </MGroups>
      <MQat>
        <MText>AutoSave</MText>
        <MToggle>Off</MToggle>
        <Slot $w={18} $ml={12}><PrintSmall s={S} /></Slot>
        <MText $ml={3}>Print Preview and Print</MText>
        <Slot $w={18} $ml={16}><UndoIcon s={S} /></Slot>
        <MText $ml={4}>Undo</MText>
        <Slot $w={26}><Chev s={0.45} /></Slot>
        <Slot $w={18}><UndoIcon s={S} flip /></Slot>
        <MText $ml={5}>Redo</MText>
        <Slot $w={26}><Chev s={0.45} /></Slot>
        <Slot $w={18}><SaveIcon s={S} /></Slot>
        <MText $ml={3}>Save</MText>
        <Slot $w={40} $c="#eee"><Chev s={0.5} /></Slot>
      </MQat>
    </MRibbon>
    <MFormula>
      <MFBox $w={101}>B3404<Chev s={0.5} /></MFBox>
      <Slot $w={21} $fs={14}>⋮</Slot>
      <MFBox $w={74} $mr={4} style={{ color: "#8e8e8e" }}>
        <Close s={0.55} />
        <Svg w={26} h={30} s={0.55}><path d="M2 16l8 12L24 2" /></Svg>
        <span style={{ fontFamily: SERIF, fontStyle: "italic", fontSize: 17, color: "#ddd" }}>fx</span>
      </MFBox>
      <MFBox $grow $mr={7}>
        <span style={{ marginLeft: 6 }}>=AVERAGE(D3416:D3442)</span>
        <Chev s={0.7} />
      </MFBox>
    </MFormula>
    <MSheetWrap>
      <MColRow>
        <MCorner>
          <Svg w={14} h={14}><path d="M14 0v14H0z" fill="#ddd" stroke="none" /></Svg>
        </MCorner>
        {Array.from({ length: MINI_COLS }, (_, i) => (
          <MColHead key={i}>{colName(i)}</MColHead>
        ))}
      </MColRow>
      {miniRows.map((cells, r) => (
        <MRowLine key={r}>
          <MRowHead>{3415 + r}</MRowHead>
          {Array.from({ length: MINI_COLS }, (_, c) => {
            const v = cells[c] || "";
            return <MCell key={c} $left={/^[A-Za-z]/.test(v)}>{v}</MCell>;
          })}
          <MRowFill />
        </MRowLine>
      ))}
      <MVScroll>
        <Svg w={10} h={10}><path d="M5 0l5 10H0z" fill="currentColor" stroke="none" /></Svg>
        <MThumbV />
        <div style={{ marginTop: "auto" }}><Svg w={10} h={10}><path d="M5 10 10 0H0z" fill="currentColor" stroke="none" /></Svg></div>
      </MVScroll>
    </MSheetWrap>
    <MBottom>
      <Slot $w={33} $ml={15} style={{ height: 29 }}><Svg w={8} h={18}><path d="M7 1 1 9l6 8" strokeWidth={1} /></Svg></Slot>
      <Slot $w={33} style={{ height: 29 }}><Svg w={8} h={18}><path d="M1 1l6 8-6 8" strokeWidth={1} /></Svg></Slot>
      <MSheetTab>23_Analysis_Race (3)</MSheetTab>
      <Slot $w={22} $ml={41} $fs={18} style={{ height: 29 }}>+</Slot>
      <Slot $w={20} $ml={1203} $fs={14} style={{ height: 29 }}>⋮</Slot>
      <MHScroll><MThumbH /></MHScroll>
    </MBottom>
    <MStatus>
      <MText>Ready</MText>
      <MText $ml={14}>Calculate</MText>
      <Slot $w={16} $ml={20}><CalcSheetIcon s={0.4} /></Slot>
      <Slot $w={16} $ml={14}><AccessIcon s={0.4} /></Slot>
      <MText $ml={3}>Accessibility: Good to go</MText>
      <Slot $w={14} $ml={1829}><DisplayIcon s={0.4} /></Slot>
      <MText $ml={1}>Display Settings</MText>
      <Slot $w={18} $ml={24} $c="#999"><ViewNormal s={0.4} /></Slot>
      <Slot $w={18} $ml={22} $c="#999"><ViewPage s={0.4} /></Slot>
      <Slot $w={18} $ml={22} $c="#999"><ViewBreak s={0.4} /></Slot>
      <MText $ml={19} style={{ color: "#999" }}>−</MText>
      <div style={{ width: 100, height: 2, marginLeft: 4, background: "#ccc" }} />
      <MText $ml={4} style={{ color: "#999" }}>+</MText>
      <MText $ml={11} style={{ color: "#999", fontSize: 11 }}>100%</MText>
    </MStatus>
  </Mini>
);

/* ---------- main window ---------- */
const Main = styled.div`
  height: 2280px;
  background: #302f2d;
  color: #fff;
  display: flex;
  flex-direction: column;
  overflow: hidden;
`;
const TitleBar = styled.div`
  height: 122px;
  flex: none;
  display: grid;
  grid-template-columns: 1422px 1036px 1fr;
  align-items: center;
`;
const TitleLeft = styled.div`
  display: flex;
  align-items: center;
  gap: 35px;
  padding-left: 40px;
  font-size: 30.2px;
  white-space: pre;
  color: #f6f6f6;
`;
const SearchBox = styled.div`
  height: 80px;
  align-self: start;
  margin-top: 20px;
  background: #444;
  border-radius: 8px;
  box-shadow: 0 2px 3px #1d1d1d;
  display: flex;
  align-items: center;
  gap: 32px;
  padding-left: 50px;
  font-size: 31px;
  color: #bdbdbd;
`;
const UserBar = styled.div`
  display: flex;
  align-items: center;
  justify-content: flex-end;
  padding-right: 30px;
  font-size: 30px;
`;
const TabBar = styled.div`
  height: 73px;
  flex: none;
  display: flex;
  align-items: center;
  padding-left: 52px;
  gap: 50px;
  font-size: 32px;
`;
const Tab = styled.span`
  position: relative;
  color: #f4f4f4;
  font-weight: ${(p) => (p.$on ? 500 : 400)};
  &:first-child { margin-right: 15px; }
  ${(p) =>
    p.$on &&
    `&::after { content: ""; position: absolute; left: 0; right: 0; bottom: -8px; height: 5px; border-radius: 2px; background: #5fb87e; }`}
`;
const TabRight = styled.div`
  margin-left: auto;
  margin-right: 30px;
  display: flex;
  gap: 21px;
`;
const CommentsBtn = styled.div`
  width: 237px;
  height: 59px;
  background: #444;
  border: 2px solid #8a8a8a;
  border-radius: 10px;
  display: flex;
  align-items: center;
  justify-content: center;
  gap: 10px;
  font-size: 31px;
`;
const ShareBtn = styled.div`
  width: 197px;
  height: 59px;
  background: #36a35f;
  border-radius: 10px;
  color: #111;
  display: flex;
  align-items: center;
  justify-content: center;
  gap: 14px;
  font-size: 31px;
`;
const Ribbon = styled.div`
  margin: 0 20px;
  height: 336px;
  flex: none;
  border-radius: 24px;
  background: #444;
  display: flex;
  flex-direction: column;
  overflow: hidden;
  box-shadow: 0 3px 4px #1b1b1b;
`;
const Groups = styled.div`
  height: 249px;
  flex: none;
  padding-top: 12px;
  display: flex;
  background: #4c4c4c;
  border-bottom: 3px solid #6a6a6a;
  color: #d0d0d0;
`;
const Group = styled.div`
  width: ${(p) => p.$w}px;
  height: 222px;
  flex: none;
  border-right: 2px solid #7a7a7a;
  display: flex;
  flex-direction: column;
  position: relative;
`;
const Body = styled.div`
  flex: 1;
  min-height: 0;
  display: flex;
  padding-top: ${(p) => p.$pt || 0}px;
  padding-left: ${(p) => p.$pl || 0}px;
`;
const Col = styled.div`
  flex: none;
  display: flex;
  flex-direction: column;
  width: ${(p) => (p.$w ? p.$w + "px" : "auto")};
  padding-top: ${(p) => p.$pt || 0}px;
  padding-left: ${(p) => p.$pl || 0}px;
`;
const Row = styled.div`
  display: flex;
  align-items: center;
  height: ${(p) => p.$h || 59}px;
  margin-top: ${(p) => p.$mt || 0}px;
  font-size: 30px;
`;
const GroupLabel = styled.div`
  height: 36px;
  line-height: 36px;
  margin-bottom: -9px;
  padding-right: ${(p) => p.$pr || 0}px;
  text-align: center;
  font-size: 28px;
  color: #f0f0f0;
`;
const LaunchBox = styled.div`
  position: absolute;
  right: 8px;
  bottom: -8px;
  color: #d8d8d8;
`;
const Combo = styled.div`
  width: ${(p) => p.$w}px;
  height: 59px;
  margin-right: ${(p) => p.$mr || 0}px;
  border: 2px solid #8a8a8a;
  border-radius: 10px;
  background: #4c4c4c;
  color: #fff;
  display: flex;
  align-items: center;
  justify-content: space-between;
  padding: 0 10px 0 4px;
  font-size: 30px;
`;
const Sep = styled.div`
  width: 2px;
  height: ${(p) => p.$h || 60}px;
  margin-left: ${(p) => p.$ml || 0}px;
  background: #7a7a7a;
  flex: none;
`;
const PasteText = styled.div`
  margin-top: 12px;
  font-size: 30px;
  line-height: 36px;
  color: #9a9a9a;
`;
const Marked = styled.div`
  width: 59px;
  height: 59px;
  margin-left: 2px;
  flex: none;
  border: 2px solid #9a9a9a;
  border-radius: 10px;
  background: #3c3c3c;
  display: flex;
  align-items: center;
  justify-content: center;
`;
const Big = styled.div`
  width: ${(p) => p.$w}px;
  flex: none;
  display: flex;
  flex-direction: column;
  align-items: center;
  font-size: 30px;
  color: ${(p) => (p.$off ? "#8a8a8a" : "#fff")};
`;
const BigIcon = styled.div`
  height: 92px;
  padding-top: ${(p) => p.$t}px;
  color: ${(p) => (p.$off ? "#6e6e6e" : "#d0d0d0")};
`;
const BigLine = styled.div`
  height: 40px;
  line-height: 40px;
  white-space: nowrap;
  display: flex;
  align-items: center;
  gap: 9px;
`;
const Tail = styled.div`
  flex: 1;
  display: flex;
  justify-content: flex-end;
  align-items: flex-end;
  padding: 0 20px 18px 0;
  color: #eee;
`;
const Qat = styled.div`
  flex: 1;
  display: flex;
  align-items: center;
  padding-left: 20px;
  padding-top: 2px;
  font-size: 29.5px;
`;
const Toggle = styled.div`
  width: 88px;
  height: 46px;
  margin-left: 12px;
  border: 3px solid #eee;
  border-radius: 23px;
  display: flex;
  align-items: center;
  gap: 5px;
  padding-left: 2px;
  font-size: 26px;
  &::before { content: ""; width: 36px; height: 36px; border-radius: 50%; background: #fff; }
`;
const QText = styled.span`
  margin-left: ${(p) => p.$ml || 0}px;
  color: ${(p) => p.$c || "#fff"};
  white-space: nowrap;
`;
const FormulaRow = styled.div`
  height: 54px;
  flex: none;
  margin-top: 21px;
  padding-left: 20px;
  display: flex;
  font-size: 32px;
`;
const FBox = styled.div`
  width: ${(p) => p.$w}px;
  flex: ${(p) => (p.$grow ? 1 : "none")};
  margin-right: ${(p) => p.$mr || 0}px;
  background: #484848;
  border: 2px solid #777;
  border-radius: 10px;
  display: flex;
  align-items: center;
  justify-content: space-between;
  padding: 0 8px 0 6px;
`;
const SheetOuter = styled.div`
  margin-top: 16px;
  height: 1561px;
  flex: none;
  display: flex;
`;
const SheetCol = styled.div`
  width: 3791px;
  flex: none;
  display: flex;
  flex-direction: column;
`;
const ColRow = styled.div`
  height: 41px;
  flex: none;
  display: flex;
  background: #2d2d2d;
  border-bottom: 1px solid #777;
`;
const Corner = styled.div`
  width: 65px;
  flex: none;
  border-right: 1px solid #888;
  display: flex;
  justify-content: flex-end;
  align-items: flex-end;
  padding: 0 3px 2px 0;
`;
const ColHead = styled.div`
  width: ${(p) => p.$w}px;
  flex: none;
  text-align: center;
  font-size: 31px;
  line-height: 41px;
  color: ${(p) => (p.$on ? "#fff" : "#f0f0f0")};
  background: ${(p) => (p.$on ? "#5e5e5e" : "transparent")};
  border-right: 1px solid #777;
`;
const SheetBody = styled.div`
  flex: 1;
  min-height: 0;
  display: flex;
`;
const RowHeads = styled.div`
  width: 65px;
  flex: none;
  overflow: hidden;
  background: #2d2d2d;
`;
const RowHead = styled.div`
  height: 52.9px;
  font-size: 32px;
  line-height: 55px;
  text-align: center;
  color: #f2f2f2;
  background: ${(p) => (p.$on ? "#666" : "transparent")};
  border-bottom: 1px solid #999;
`;
const Canvas = styled.div`
  flex: 1;
  position: relative;
  background: #a0a0a0;
  overflow: hidden;
`;
const PrintArea = styled.div`
  width: 2238px;
  height: 1325px;
  display: flex;
  background-color: #fff;
  background-image: repeating-linear-gradient(
    to bottom,
    transparent 0 52px,
    #d9d9d9 52px 53px
  );
  border-left: 3px solid #0000c8;
  border-right: 4px solid #0000c8;
  border-bottom: 4px solid #0000c8;
`;
const GridCol = styled.div`
  width: ${(p) => p.$w}px;
  flex: none;
  border-right: 1px solid #dcdcdc;
`;
const Row64 = styled.div`
  position: absolute;
  left: 3px;
  top: 0;
  width: 2234px;
  height: 54px;
  background: #fff;
  border-bottom: 3px solid #0000c8;
  overflow: hidden;
`;
const Row64Tick = styled.div`
  position: absolute;
  left: 47px;
  top: 0;
  width: 1px;
  height: 52px;
  background: #000;
`;
const CutTitle = styled.div`
  position: absolute;
  left: 962px;
  top: -29px;
  font: bold 40px ${SERIF};
  color: #000;
  white-space: nowrap;
`;
const LegendBox = styled.div`
  position: absolute;
  left: 851px;
  top: 11px;
  width: 617px;
  height: 34px;
  background: #fff;
  border: 1px solid #000;
  display: flex;
  align-items: center;
  padding-left: 25px;
  gap: 4px;
  font: bold 30px ${SERIF};
  color: #000;
`;
const LegendItem = styled.span`
  margin-right: ${(p) => p.$mr || 0}px;
  display: flex;
  align-items: center;
  gap: 4px;
`;
const ChartWrap = styled.div`
  position: absolute;
  left: 45px;
  top: 107px;
  width: 2193px;
  height: 1112px;
  text { font-family: ${SERIF}; font-weight: 700; fill: #000; }
`;
const Selection = styled.div`
  position: absolute;
  left: 2553px;
  top: 846px;
  width: 167px;
  height: 58px;
  border: 3px solid #217346;
  &::after {
    content: "";
    position: absolute;
    right: -5px;
    bottom: -5px;
    width: 8px;
    height: 8px;
    background: #217346;
  }
`;
const VScroll = styled.div`
  flex: 1;
  margin-left: 2px;
  background: #3a3a3a;
  border-radius: 24px 24px 0 0;
  display: flex;
  flex-direction: column;
  align-items: center;
  padding: 18px 0 30px;
  color: #d0d0d0;
`;
const VThumb = styled.div`
  width: 18px;
  height: 450px;
  margin-top: 1030px;
  border-radius: 9px;
  background: #c0c0c0;
`;
const SheetTabs = styled.div`
  height: 42px;
  flex: none;
  display: flex;
  background: #2f2e2c;
  overflow: hidden;
  position: relative;
  font-size: 34px;
  color: #f4f4f4;
`;
const NavArrow = styled.div`
  width: ${(p) => p.$w}px;
  margin-left: ${(p) => p.$ml || 0}px;
  display: flex;
  align-items: center;
  justify-content: center;
  color: #aaa;
`;
const SheetTab = styled.div`
  position: relative;
  flex: none;
  width: ${(p) => p.$w}px;
  margin-left: ${(p) => p.$ml}px;
  height: 32px;
  overflow: hidden;
  white-space: nowrap;
  display: flex;
  justify-content: center;
  padding-top: 5px;
  line-height: 38px;
`;
const TabSep = styled.div`
  margin-left: ${(p) => p.$ml}px;
  margin-top: 10px;
  flex: none;
  width: 2px;
  height: 20px;
  background: #666;
`;
const ActiveTab = styled.div`
  position: relative;
  flex: none;
  margin-left: ${(p) => p.$ml}px;
  width: 398px;
  height: 32px;
  background: #fff;
  color: #000;
  border-radius: 0 0 10px 10px;
  font-size: 35px;
  text-align: center;
  line-height: 28px;
  white-space: nowrap;
  overflow: hidden;
  &::after {
    content: "";
    position: absolute;
    left: 22px;
    right: 24px;
    top: 20px;
    height: 5px;
    background: #107c41;
    mix-blend-mode: multiply;
  }
`;
const HScroll = styled.div`
  position: absolute;
  left: 2318px;
  right: 47px;
  top: 0;
  height: 42px;
  background: #3d3d3d;
  border-radius: 0 0 24px 24px;
  display: flex;
  align-items: center;
  padding: 0 12px;
  color: #d0d0d0;
`;
const HThumb = styled.div`
  width: 1343px;
  height: 21px;
  margin-left: 17px;
  margin-right: auto;
  border-radius: 10px;
  background: #c0c0c0;
`;
const SheetTools = styled.div`
  position: absolute;
  left: 2236px;
  top: 0;
  width: 82px;
  height: 42px;
  display: flex;
  align-items: center;
  justify-content: space-between;
  padding: 0 10px 0 6px;
  font-size: 34px;
  background: #302d2a;
`;
const StatusBar = styled.div`
  height: 55px;
  flex: none;
  background: #393939;
  display: flex;
  align-items: center;
  padding-left: 17px;
  padding-top: 2px;
  font-size: 27px;
  color: #f0f0f0;
`;
const ZoomTrack = styled.div`
  width: 248px;
  height: 4px;
  margin-left: 16px;
  background: #cfcfcf;
  position: relative;
  &::after {
    content: "";
    position: absolute;
    left: 122px;
    top: -14px;
    width: 6px;
    height: 32px;
    background: #cfcfcf;
  }
`;
const ViewOn = styled.div`
  width: 97px;
  height: 53px;
  margin-left: ${(p) => p.$ml}px;
  flex: none;
  background: #474747;
  display: flex;
  align-items: center;
  justify-content: center;
`;

/* ---------- chart ---------- */
const pairs = (a, f) => {
  const out = [];
  for (let i = 0; i < a.length; i += 2) out.push(f(a[i], a[i + 1]));
  return out;
};
const L = (a) => pairs(a, (x, y) => [x / 1.307, 1700 + y / 1.568]);
const R = (a) => pairs(a, (x, y) => [1200 + x / 1.307, 1800 + y / 1.206]);
const B = (a) => pairs(a, (x, y) => [250 + x / 1.568, 2500 + y / 3]);
const PX0 = 304, PX1 = 2116, PY0 = 1928, PY1 = 2834;
const BL = [PX0, PY1], TR = [PX1, PY0];

const levels = [
  { c: "#0f3cff", p: [BL, ...L([398, 412, 415, 358]), TR] },
  { c: "#0080ff", p: [BL, ...L([398, 720, 415, 560, 456, 432, 492, 358]), TR] },
  { c: "#14a8ff", p: [...B([131, 1003, 145, 612, 140, 225, 137, 0]), ...L([441, 1170, 444, 965, 441, 815, 457, 635, 500, 490, 555, 385, 575, 358]), ...R([145, 155, 250, 207, 408, 192, 566, 180, 723, 163, 760, 155]), TR] },
  { c: "#00dcff", p: [...B([182, 1003, 197, 612, 190, 300, 187, 0]), ...L([481, 1170, 490, 965, 487, 880, 492, 765, 500, 690, 550, 540, 620, 436, 688, 358, 1345, 358, 1455, 425, 1503, 467]), ...R([0, 258, 92, 288, 175, 311, 250, 325, 408, 310, 566, 306, 723, 304, 881, 270, 1039, 243, 1197, 216])] },
  { c: "#0aff96", p: [...B([233, 1003, 250, 612, 238, 225, 237, 0]), ...L([525, 1170, 533, 965, 531, 935, 543, 750, 556, 710, 598, 615, 670, 505, 714, 458, 872, 380, 1020, 378, 1140, 418, 1250, 480, 1345, 562, 1445, 632, 1503, 687]), ...R([0, 422, 92, 443, 250, 452, 408, 434, 566, 427, 723, 426, 881, 405, 960, 392, 1039, 392, 1105, 375, 1197, 359])] },
  { c: "#00ff50", p: [...B([287, 1003, 304, 612, 292, 225, 290, 0]), ...L([568, 1170, 582, 965, 598, 815, 653, 685, 714, 591, 767, 560, 872, 511, 910, 511, 1030, 526, 1050, 532, 1100, 562, 1160, 597, 1260, 680, 1345, 752, 1503, 877]), ...R([0, 565, 92, 579, 250, 589, 330, 570, 408, 563, 470, 558, 566, 559, 650, 553, 723, 553, 810, 544, 881, 542, 960, 541, 1039, 553, 1105, 530, 1197, 508])] },
  { c: "#50ff00", p: [...B([341, 1003, 358, 612, 352, 400, 349, 0]), ...L([628, 1170, 634, 1070, 650, 965, 657, 890, 714, 744, 872, 655, 945, 665, 1030, 686, 1075, 712, 1140, 765, 1187, 806, 1345, 935, 1385, 965, 1503, 1075]), ...R([0, 712, 25, 715, 92, 727, 250, 737, 340, 711, 408, 699, 566, 699, 630, 689, 723, 683, 780, 674, 881, 671, 1039, 686, 1197, 652])] },
  { c: "#b9ff00", p: [...B([397, 1003, 413, 612, 407, 100, 418, 0]), ...L([688, 1170, 690, 1140, 714, 967, 800, 880, 872, 825, 940, 845, 1030, 870, 1080, 910, 1135, 967, 1165, 1005, 1187, 1043, 1325, 1170, 1503, 1262]), ...R([0, 847, 92, 852, 165, 848, 250, 851, 320, 834, 408, 820, 566, 819, 723, 806, 881, 779, 1039, 791, 1197, 764])] },
  { c: "#d2ff00", p: [...B([452, 1003, 465, 700, 472, 612, 465, 225]), ...L([765, 1235, 818, 1170, 835, 1125, 872, 1075, 960, 1082, 1030, 1103, 1060, 1140, 1080, 1172, 1187, 1270, 1345, 1358, 1380, 1373, 1503, 1420, 1520, 1415]), ...R([0, 965, 92, 960, 110, 957, 250, 950, 320, 935, 408, 915, 566, 913, 590, 911, 723, 910, 881, 885, 980, 878, 1039, 882, 1120, 862, 1197, 852])] },
  { c: "#e6ff0a", p: [...B([555, 1003, 586, 612, 585, 480, 632, 185, 654, 145, 782, 100, 843, 105, 930, 230, 1034, 398, 1155, 472, 1222, 537, 1411, 612]), ...R([65, 1063, 92, 1062, 210, 1047, 250, 1046, 330, 1024, 408, 1008, 470, 997, 566, 996, 625, 991, 723, 990, 881, 973, 915, 967, 1039, 962, 1197, 936])] },
  { c: "#fff000", p: [...B([704, 1003, 752, 815, 843, 700, 875, 678, 1034, 795, 1108, 773, 1222, 818, 1312, 798, 1411, 825, 1497, 787, 1568, 765]), ...R([92, 1148, 160, 1140, 250, 1132, 408, 1098, 445, 1092, 566, 1074, 723, 1062, 881, 1043, 1000, 1028, 1039, 1026, 1120, 1012, 1197, 1003])] },
  { c: "#ffe000", p: [...B([1483, 1003, 1568, 962]), ...R([92, 1228, 250, 1209, 408, 1177, 475, 1161, 566, 1149, 615, 1138, 723, 1130, 760, 1123, 881, 1111, 900, 1107, 1039, 1090, 1197, 1069])] },
  { c: "#ffc800", p: R([445, 1248, 475, 1240, 550, 1223, 566, 1222, 675, 1198, 723, 1195, 815, 1177, 881, 1170, 950, 1156, 1039, 1146, 1130, 1138, 1197, 1131]) },
  { c: "#ffb400", p: R([790, 1248, 881, 1230, 1000, 1207, 1039, 1202, 1120, 1195, 1197, 1190]) },
];
const polyPts = (p) => [...p, [PX1, PY1]].map((q) => q.join(",")).join(" ");

const xTicks = Array.from({ length: 16 }, (_, i) => i);
const yTicks = Array.from({ length: 8 }, (_, i) => i);
const gx = (i) => PX0 + (i * (PX1 - PX0)) / 15;
const gy = (i) => PY0 + (i * (PY1 - PY0)) / 7;

const legendLines = [
  { c: "#ff6a00", t: ["275", "0-", "280", "0"] },
  { c: "#ffa200", t: ["270", "0-", "275", "0"] },
  { c: "#ffb000", t: ["265", "0-", "270", "0"] },
];

const Chart = () => (
  <svg width="2193" height="1112" viewBox="110 1850 2193 1112" style={{ display: "block" }}>
    <rect x={110.5} y={1850.5} width={2192} height={1111} fill="#fff" stroke="#000" strokeWidth={1.5} />
    <text x={1283} y={1895} fontSize={40} textAnchor="middle" textDecoration="underline">
      Total Downforce Carpet Map
    </text>
    <rect x={PX0} y={PY0} width={PX1 - PX0} height={PY1 - PY0} fill="#1a18ff" />
    {levels.map((l) => (
      <polygon key={l.c} points={polyPts(l.p)} fill={l.c} stroke="#000" strokeWidth={1.8} strokeLinejoin="round" />
    ))}
    {xTicks.map((i) => (
      <line key={i} x1={gx(i)} x2={gx(i)} y1={PY0} y2={PY1 + 9} stroke="#000" strokeWidth={2.4} />
    ))}
    {yTicks.map((i) => (
      <line key={i} x1={PX0} x2={PX1 + 9} y1={gy(i)} y2={gy(i)} stroke="#000" strokeWidth={2.4} />
    ))}
    <rect x={PX0} y={PY0} width={PX1 - PX0} height={PY1 - PY0} fill="none" stroke="#000" strokeWidth={2.8} />
    {xTicks.map((i) => (
      <text key={i} x={gx(i) + 1} y={2883} fontSize={31} textAnchor="middle">{(5 + i * 5).toFixed(1)}</text>
    ))}
    {yTicks.map((i) => (
      <text key={i} x={2133} y={gy(i) + 11} fontSize={31}>{(40 - i * 5).toFixed(1)}</text>
    ))}
    <text x={1241} y={2900} fontSize={40} textAnchor="middle">Rear Ride Height (mm)</text>
    <text transform="translate(2266 2400) rotate(-90)" fontSize={40} textAnchor="middle">Front Ride Height (mm)</text>
    <rect x={117.5} y={2089.5} width={91} height={417} fill="#fff" stroke="#000" strokeWidth={1.5} />
    {legendLines.map((l, i) => (
      <g key={l.c}>
        <rect x={131} y={2100 + i * 139.5} width={15} height={15} fill={l.c} stroke="#000" strokeWidth={2.5} />
        {l.t.map((t, j) => (
          <text key={j} x={152} y={2117 + i * 139.5 + j * 35} fontSize={30}>{t}</text>
        ))}
      </g>
    ))}
  </svg>
);

const COLS = [
  ["A", 167], ["B", 125],
  ...["C", "D", "E", "F", "G", "H", "I", "J", "K", "L", "M", "N", "O", "P", "Q", "R", "S", "T"].map((c) => [c, 108]),
  ...["U", "V", "W", "X", "Y", "Z", "AA", "AB", "AC"].map((c) => [c, 160]),
];
const PRINT_COLS = COLS.slice(0, 20);
const ROWS = Array.from({ length: 29 }, (_, i) => 64 + i);

const Marker = ({ color, kind }) => (
  <svg width={66} height={26} viewBox="0 0 66 26" style={{ display: "block" }}>
    <line x1={0} x2={66} y1={13} y2={13} stroke={color} strokeWidth={3} />
    {kind === "diamond" && <path d="M33 3l10 10-10 10-10-10z" fill={color} />}
    {kind === "square" && <rect x={23} y={3} width={20} height={20} fill={color} />}
    {kind === "circle" && <circle cx={33} cy={13} r={9} fill={color} />}
    {kind === "x" && <path d="M28 8l10 10M38 8 28 18" stroke={color} strokeWidth={3} />}
  </svg>
);

const BigBtn = ({ w, t = 18, icon, lines, off }) => (
  <Big $w={w} $off={off}>
    <BigIcon $t={t} $off={off}>{icon}</BigIcon>
    {lines.map((l, i) => (
      <BigLine key={i}>{l}</BigLine>
    ))}
  </Big>
);

const ClipRow = ({ icon, chev }) => (
  <Row $h={56} $mt={8}>
    <Slot $w={50}>{icon}</Slot>
    {chev && <Slot $w={44}><Chev /></Slot>}
  </Row>
);

const MainWindow = () => (
  <Main>
    <TitleBar>
      <TitleLeft>
        <ExcelLogo s={0.72} />
        0540 Medium Downforce Carpet Map V101.xls  -  Compatibility Mode  -  Excel
      </TitleLeft>
      <SearchBox><SearchGlass />Search</SearchBox>
      <UserBar>
        paul thomas
        <Avatar $d={60} $fs={28} $ml={23}>PT</Avatar>
        <Slot $w={60} $ml={57}><PenIcon /></Slot>
        <Slot $w={60} $ml={57}><Minimize /></Slot>
        <Slot $w={60} $ml={60}><Restore /></Slot>
        <Slot $w={60} $ml={60}><Close /></Slot>
      </UserBar>
    </TitleBar>
    <TabBar>
      {["File", "Home", "Insert", "Draw", "Page Layout", "Formulas", "Data", "Review", "View", "Developer", "Help"].map((t) => (
        <Tab key={t} $on={t === "Home"}>{t}</Tab>
      ))}
      <TabRight>
        <CommentsBtn><CommentIcon />Comments</CommentsBtn>
        <ShareBtn><ShareIcon />Share<Chev /></ShareBtn>
      </TabRight>
    </TabBar>
    <Ribbon>
      <Groups>
        <Group $w={258}>
          <Body>
            <Col $w={144} $pl={20} $pt={9} style={{ alignItems: "center", color: "#9a9a9a" }}>
              <PasteIcon />
              <PasteText>Paste</PasteText>
              <div style={{ marginTop: 14 }}><Chev /></div>
            </Col>
            <Col style={{ marginTop: -8 }}>
              <ClipRow icon={<CutIcon />} />
              <ClipRow icon={<CopyIcon />} chev />
              <ClipRow icon={<BrushIcon />} />
            </Col>
          </Body>
          <GroupLabel $pr={34}>Clipboard</GroupLabel>
          <LaunchBox><Launcher /></LaunchBox>
        </Group>
        <Group $w={587}>
          <Body $pt={18} $pl={22}>
            <Col>
              <Row>
                <Combo $w={305} $mr={7}>Arial<Chev /></Combo>
                <Combo $w={103}>10<Chev /></Combo>
                <Slot $w={66} $fs={50} $light style={{ alignItems: "center" }}>A<Svg w={14} h={10} sw={2.5}><path d="M1 9l6-7 6 7" stroke="#4aa3e8" /></Svg></Slot>
                <Slot $w={68} $fs={42} $light>A<Svg w={14} h={10} sw={2.5}><path d="M1 1l6 7 6-7" stroke="#4aa3e8" /></Svg></Slot>
              </Row>
              <Row $h={60} $mt={19}>
                <Slot $w={60} $fs={38} $bold>B</Slot>
                <Slot $w={68} $fs={38} $italic>I</Slot>
                <Slot $w={60} $fs={38}><u>U</u></Slot>
                <Slot $w={36}><Chev /></Slot>
                <Sep $ml={8} />
                <Slot $w={66}><BorderIcon /></Slot>
                <Slot $w={30}><Chev /></Slot>
                <Sep $ml={11} />
                <Slot $w={70}><FillIcon /></Slot>
                <Slot $w={22}><Chev /></Slot>
                <Slot $w={90}><ColorA /></Slot>
                <Slot $w={2}><Chev /></Slot>
              </Row>
            </Col>
          </Body>
          <GroupLabel $pr={40}>Font</GroupLabel>
          <LaunchBox><Launcher /></LaunchBox>
        </Group>
        <Group $w={735}>
          <Body $pt={15}>
            <Col $w={364} $pl={19} style={{ paddingTop: 3 }}>
              <Row>
                <Slot $w={64}><AlignV pos="top" /></Slot>
                <Slot $w={66}><AlignV pos="mid" /></Slot>
                <Marked><AlignV pos="bot" /></Marked>
                <Sep $ml={7} />
                <Slot $w={68}><Orient /></Slot>
                <Slot $w={18}><Chev /></Slot>
              </Row>
              <Row $h={60} $mt={19}>
                <Slot $w={64}><AlignH pos="left" /></Slot>
                <Slot $w={66}><AlignH pos="center" /></Slot>
                <Slot $w={66}><AlignH pos="right" /></Slot>
                <Sep $ml={2} />
                <Slot $w={68}><Outdent /></Slot>
                <Slot $w={62}><Outdent flip /></Slot>
              </Row>
            </Col>
            <Sep $h={156} />
            <Col $pl={15} style={{ paddingTop: 3 }}>
              <Row><Slot $w={60}><WrapIcon /></Slot><QText>Wrap Text</QText></Row>
              <Row $h={60} $mt={19}><Slot $w={60}><MergeIcon /></Slot><QText>Merge &amp; Center</QText><Slot $w={76}><Chev /></Slot></Row>
            </Col>
          </Body>
          <GroupLabel $pr={36}>Alignment</GroupLabel>
          <LaunchBox><Launcher /></LaunchBox>
        </Group>
        <Group $w={405}>
          <Body $pt={18} $pl={22}>
            <Col>
              <Row><Combo $w={363}>General<Chev /></Combo></Row>
              <Row $h={60} $mt={19}>
                <Slot $w={60}><Acct /></Slot>
                <Slot $w={36}><Chev /></Slot>
                <Slot $w={70} $fs={56} $light $c="#c4c4c4">%</Slot>
                <Slot $w={64} $fs={84} $c="#c4c4c4" $serif $bold style={{ paddingBottom: 40 }}>,</Slot>
                <Sep $ml={3} />
                <Slot $w={66}><DecInc out /></Slot>
                <Slot $w={64}><DecInc /></Slot>
              </Row>
            </Col>
          </Body>
          <GroupLabel $pr={36}>Number</GroupLabel>
          <LaunchBox><Launcher /></LaunchBox>
        </Group>
        <Group $w={493}>
          <Body>
            <BigBtn w={228} icon={<CondIcon />} lines={["Conditional", <>Formatting<Chev /></>]} />
            <BigBtn w={110} icon={<FmtTableIcon />} lines={["Format as", <>Table<Chev /></>]} />
            <BigBtn w={153} icon={<CellStyleIcon />} lines={["Cell", <>Styles<Chev /></>]} />
          </Body>
          <GroupLabel>Styles</GroupLabel>
        </Group>
        <Group $w={365}>
          <Body>
            <BigBtn w={148} icon={<InsertIcon />} lines={["Insert", <Chev />]} />
            <BigBtn w={70} icon={<DeleteIcon />} lines={["Delete", <Chev />]} />
            <BigBtn w={145} t={4} icon={<FormatIcon />} lines={["Format", <Chev />]} />
          </Body>
          <GroupLabel>Cells</GroupLabel>
        </Group>
        <Group $w={374}>
          <Body>
            <Col style={{ marginTop: -8 }}>
              <Row $h={56} $mt={8}><Slot $w={68} $ml={17}><SigmaIcon /></Slot><Slot $w={26}><Chev /></Slot></Row>
              <Row $h={56} $mt={8}><Slot $w={68} $ml={17}><FillDownIcon /></Slot><Slot $w={26}><Chev /></Slot></Row>
              <Row $h={56} $mt={8}><Slot $w={68} $ml={17}><EraserIcon /></Slot><Slot $w={26}><Chev /></Slot></Row>
            </Col>
            <BigBtn w={132} t={12} icon={<SortIcon />} lines={["Sort &", <>Filter<Chev /></>]} />
            <BigBtn w={118} t={9} icon={<FindIcon />} lines={["Find &", <>Select<Chev /></>]} />
          </Body>
          <GroupLabel>Editing</GroupLabel>
        </Group>
        <Group $w={156}>
          <Body><BigBtn w={154} t={10} off icon={<AddinsIcon />} lines={["Add-ins"]} /></Body>
          <GroupLabel>Add-ins</GroupLabel>
        </Group>
        <Group $w={222}>
          <Body><BigBtn w={220} t={10} icon={<PrintPrevIcon />} lines={["Print Preview", "and Print"]} /></Body>
          <GroupLabel>Print</GroupLabel>
        </Group>
        <Tail><Chev big /></Tail>
      </Groups>
      <Qat>
        <QText>AutoSave</QText>
        <Toggle>Off</Toggle>
        <Slot $w={34} $ml={35} $c="#d0d0d0"><PrintSmall /></Slot>
        <QText $ml={10}>Print Preview and Print</QText>
        <Slot $w={40} $ml={47} $c="#a8a8a8"><UndoIcon /></Slot>
        <QText $ml={10} $c="#9a9a9a">Undo</QText>
        <Slot $w={60} $c="#9a9a9a"><Chev /></Slot>
        <Slot $w={40} $c="#a8a8a8"><UndoIcon flip /></Slot>
        <QText $ml={14} $c="#9a9a9a">Redo</QText>
        <Slot $w={74} $c="#9a9a9a"><Chev /></Slot>
        <Slot $w={40}><SaveIcon /></Slot>
        <QText $ml={10}>Save</QText>
        <Slot $w={122}>
          <Svg w={16} h={22} sw={3}><path d="M0 2h16M2 11l6 8 6-8" /></Svg>
        </Slot>
      </Qat>
    </Ribbon>
    <FormulaRow>
      <FBox $w={252}>W80<Chev /></FBox>
      <Slot $w={51} $fs={36}>⋮</Slot>
      <FBox $w={181} $mr={11} style={{ color: "#8e8e8e", padding: "0 14px" }}>
        <Close />
        <Svg w={32} h={30}><path d="M2 14l10 14L30 2" /></Svg>
        <span style={{ fontFamily: SERIF, fontStyle: "italic", fontSize: 42, color: "#ddd" }}>fx</span>
      </FBox>
      <FBox $grow $mr={22}><span /><Chev big s={0.8} /></FBox>
    </FormulaRow>
    <SheetOuter>
      <SheetCol>
        <ColRow>
          <Corner><Svg w={36} h={35}><path d="M36 0v35H0z" fill="#d8d8d8" stroke="none" /></Svg></Corner>
          {COLS.map(([c, w]) => (
            <ColHead key={c} $w={w} $on={c === "W"}>{c}</ColHead>
          ))}
        </ColRow>
        <SheetBody>
          <RowHeads>
            {ROWS.map((r) => (
              <RowHead key={r} $on={r === 80}>{r}</RowHead>
            ))}
          </RowHeads>
          <Canvas>
            <PrintArea>
              {PRINT_COLS.map(([c, w], i) => (
                <GridCol key={c} $w={i === 0 ? w - 3 : w} />
              ))}
            </PrintArea>
            <Row64>
              <Row64Tick />
              <CutTitle>Rear Ride Height (mm)</CutTitle>
              <LegendBox>
                <Marker color="#00007f" kind="diamond" />
                <LegendItem $mr={23}>40.0</LegendItem>
                <Marker color="#2020ff" kind="square" />
                <LegendItem $mr={23}>35.0</LegendItem>
                <Marker color="#00ccff" kind="circle" />
                <LegendItem $mr={23}>30.0</LegendItem>
                <Marker color="#008000" kind="x" />
                <LegendItem>25.0</LegendItem>
              </LegendBox>
            </Row64>
            <ChartWrap><Chart /></ChartWrap>
            <Selection />
          </Canvas>
        </SheetBody>
      </SheetCol>
      <VScroll>
        <Svg w={22} h={16}><path d="M11 0l11 16H0z" fill="currentColor" stroke="none" /></Svg>
        <VThumb />
        <div style={{ marginTop: "auto" }}><Svg w={22} h={16}><path d="M11 16 22 0H0z" fill="currentColor" stroke="none" /></Svg></div>
      </VScroll>
    </SheetOuter>
    <SheetTabs>
      <NavArrow $w={40} $ml={17}><Svg w={16} h={32} sw={2}><path d="M14 2 3 16l11 14" /></Svg></NavArrow>
      <NavArrow $w={40} $ml={5}><Svg w={16} h={32} sw={2}><path d="M2 2l11 14L2 30" /></Svg></NavArrow>
      <SheetTab $w={307} $ml={75}>0530 Baseline Setup</SheetTab>
      <TabSep $ml={36} />
      <SheetTab $w={202} $ml={35}>2005 Balance</SheetTab>
      <TabSep $ml={34} />
      <ActiveTab $ml={7}>2005 Total Downforce</ActiveTab>
      <TabSep $ml={6} />
      <SheetTab $w={343} $ml={35}>2005 Front Downforce</SheetTab>
      <TabSep $ml={36} />
      <SheetTab $w={332} $ml={35}>2005 Rear Downforce</SheetTab>
      <TabSep $ml={37} />
      <SheetTab $w={165} $ml={31}>2005 Dr•••</SheetTab>
      <SheetTools>
        <span>+</span>
        <span>⋮</span>
      </SheetTools>
      <HScroll>
        <Svg w={14} h={28}><path d="M14 0v28L0 14z" fill="currentColor" stroke="none" /></Svg>
        <HThumb />
        <Svg w={14} h={28}><path d="M0 0v28l14-14z" fill="currentColor" stroke="none" /></Svg>
      </HScroll>
    </SheetTabs>
    <StatusBar>
      <QText>Ready</QText>
      <QText $ml={36}>Calculate</QText>
      <Slot $w={34} $ml={43}><CalcSheetIcon /></Slot>
      <Slot $w={34} $ml={44}><AccessIcon /></Slot>
      <QText $ml={5}>Accessibility: Unavailable</QText>
      <Slot $w={38} $ml={2120}><DisplayIcon /></Slot>
      <QText $ml={5}>Display Settings</QText>
      <Slot $w={36} $ml={72}><ViewNormal /></Slot>
      <Slot $w={36} $ml={66}><ViewPage /></Slot>
      <ViewOn $ml={32}><ViewBreak /></ViewOn>
      <QText $ml={15}>−</QText>
      <ZoomTrack />
      <QText $ml={14}>+</QText>
      <QText $ml={30}>100%</QText>
    </StatusBar>
  </Main>
);

/* ---------- taskbar ---------- */
const Taskbar = styled.div`
  height: 120px;
  border-top: 3px solid #cfc9c2;
  background: linear-gradient(
    90deg,
    #dcdcdc 0%,
    #e2dcd6 20%,
    #e3dfd2 30%,
    #f7e7dd 45%,
    #f8e6dc 60%,
    #f2e2d4 75%,
    #e8dfd6 88%,
    #dcdcdc 100%
  );
  display: flex;
  align-items: center;
  padding-left: 1060px;
  color: #111;
`;
const TaskSearch = styled.div`
  width: 539px;
  height: 76px;
  margin-left: 38px;
  margin-right: 9px;
  border-radius: 38px;
  background: #fbf7f3;
  border: 2px solid #e0d6cd;
  border-bottom-color: #c8c0b8;
  display: flex;
  align-items: center;
  gap: 28px;
  padding-left: 26px;
  font-size: 33px;
  color: #444;
`;
const AppSlot = styled.div`
  width: 110px;
  height: 117px;
  flex: none;
  position: relative;
  display: flex;
  align-items: center;
  justify-content: center;
`;
const Highlight = styled.div`
  position: absolute;
  left: 6px;
  right: 4px;
  top: 8px;
  bottom: 8px;
  background: #fde7e6;
  border-radius: 10px;
`;
const AppIconBox = styled.div`
  position: relative;
  margin-bottom: 8px;
`;
const RunDot = styled.div`
  position: absolute;
  left: 50%;
  bottom: 11px;
  margin-left: -5px;
  width: 10px;
  height: 10px;
  border-radius: 50%;
  background: ${(p) => p.$c};
`;
const Tray = styled.div`
  margin-left: 365px;
  display: flex;
  align-items: center;
  height: 100%;
  font-size: 28px;
`;
const TrayStack = styled.div`
  width: ${(p) => p.$w}px;
  flex: none;
  display: flex;
  flex-direction: column;
  align-items: ${(p) => p.$align || "center"};
  gap: ${(p) => p.$gap ?? 6}px;
  line-height: 35px;
`;

const apps = [
  { k: "mail", i: <MailIcon /> },
  { k: "store", i: <StoreIcon /> },
  { k: "paint", i: <PaintIcon /> },
  { k: "edge", i: <EdgeIcon /> },
  { k: "files", i: <FilesIcon />, dot: "#8a8580" },
  { k: "wa", i: <WhatsIcon />, dot: "#8a8580" },
  { k: "star", i: <StarIcon /> },
  { k: "spot", i: <SpotifyIcon /> },
  { k: "word", i: <WordLogo />, dot: "#c42b1c", on: true },
  { k: "xl", i: <ExcelLogo />, dot: "#8a8580" },
];

const TaskbarRow = () => (
  <Taskbar>
    <WindowsLogo />
    <TaskSearch>
      <Svg w={36} h={48} sw={4.5}>
        <ellipse cx={17} cy={18} rx={14} ry={15} />
        <path d="M24 32l9 14" />
      </Svg>
      Search
    </TaskSearch>
    {apps.map((a) => (
      <AppSlot key={a.k}>
        {a.on && <Highlight />}
        <AppIconBox>{a.i}</AppIconBox>
        {a.dot && <RunDot $c={a.dot} />}
      </AppSlot>
    ))}
    <Tray>
      <Slot $w={72}><Svg w={26} h={22}><path d="M2 20 13 3l11 17" /></Svg></Slot>
      <TrayStack $w={118}><span>ENG</span><span>UK</span></TrayStack>
      <Slot $w={70}>
        <Svg w={36} h={40} sw={3.5}>
          <path d="M2 14a22 22 0 0 1 32 0M8 22a14 14 0 0 1 20 0M13 30a7 7 0 0 1 10 0" />
          <circle cx={18} cy={37} r={2} fill="currentColor" />
        </Svg>
      </Slot>
      <Slot $w={42}>
        <Svg w={34} h={40} sw={3}>
          <path d="M2 14h8l10-10v32L10 26H2z" />
          <path d="M25 12c4 5 4 11 0 16" />
        </Svg>
      </Slot>
      <Slot $w={84}>
        <Svg w={42} h={46} sw={3.5}>
          <rect x={3} y={14} width={32} height={28} rx={4} />
          <rect x={7} y={26} width={24} height={12} fill="currentColor" />
          <path d="M38 22v12" />
          <path d="M22 2 14 16h8l-4 10" />
        </Svg>
      </Slot>
      <TrayStack $w={176} $align="flex-end"><span>10:29</span><span style={{ fontSize: 29 }}>30/08/2023</span></TrayStack>
      <Slot $w={78}>
        <Svg w={34} h={48} sw={3}>
          <path d="M6 34c4-6 2-18 11-22 9 4 7 16 11 22z" fill="currentColor" />
          <path d="M12 42h10l-5 5z" fill="currentColor" />
          <path d="M22 4h8l-8 8h8" />
        </Svg>
      </Slot>
    </Tray>
  </Taskbar>
);

export default function App() {
  return (
    <>
      <Global />
      <Top>
        <SideLeft />
        <MiniWindow />
        <SideRight />
      </Top>
      <MainWindow />
      <TaskbarRow />
    </>
  );
}
